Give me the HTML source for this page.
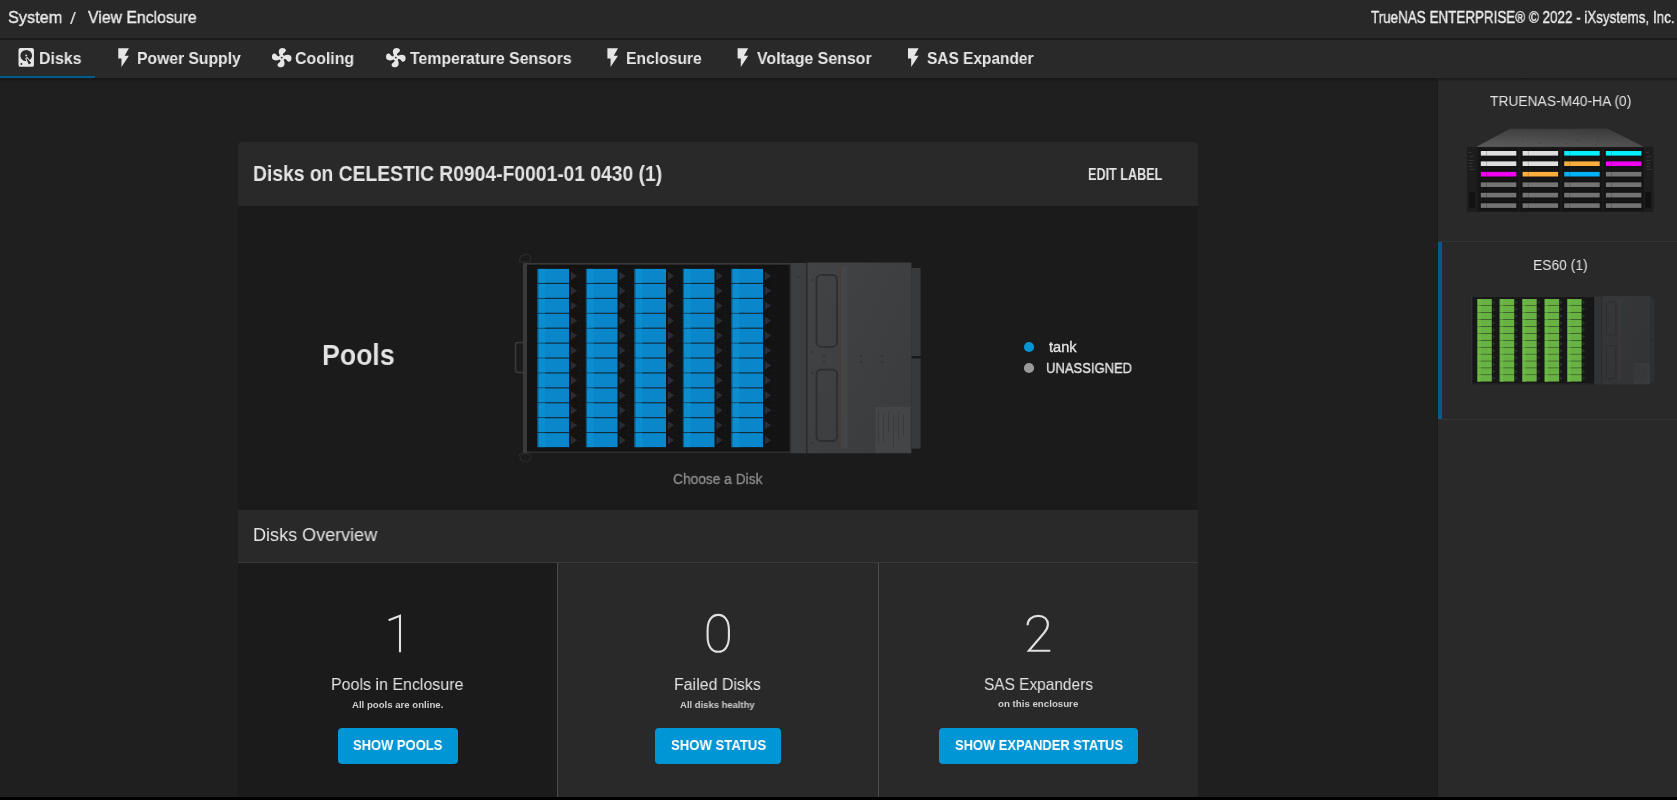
<!DOCTYPE html>
<html><head><meta charset="utf-8"><style>*{margin:0;padding:0;box-sizing:border-box}
html,body{width:1677px;height:800px;overflow:hidden;background:#1f1f1f;font-family:"Liberation Sans",sans-serif;color:#e0e0e0}
.a{position:absolute}
.t{position:absolute;white-space:nowrap;line-height:1;transform-origin:0 0;will-change:transform}
svg{position:absolute;left:0;top:0}
</style></head><body>
<div class="a" style="left:0px;top:0px;width:1677px;height:38px;background:#282828;"></div>
<div class="a" style="left:0px;top:38px;width:1677px;height:2px;background:#1b1b1b;"></div>
<div class="a" style="left:0px;top:40px;width:1677px;height:38px;background:#292929;"></div>
<div class="a" style="left:0px;top:78px;width:1438px;height:5px;background:linear-gradient(#171717,#1f1f1f);"></div>
<div class="a" style="left:0px;top:76px;width:95px;height:2px;background:#005a8a;"></div>
<div class="a" style="left:1438px;top:78px;width:239px;height:722px;background:#292929;"></div>
<div class="a" style="left:1437px;top:78px;width:1px;height:722px;background:#1b1b1b;"></div>
<div class="a" style="left:1438px;top:78px;width:239px;height:4px;background:linear-gradient(#1a1a1a,#292929);"></div>
<div class="a" style="left:1438px;top:241px;width:239px;height:1px;background:#333;"></div>
<div class="a" style="left:1438px;top:419px;width:239px;height:1px;background:#333;"></div>
<div class="a" style="left:1438px;top:242px;width:4px;height:177px;background:#005a8a;"></div>
<div class="a" style="left:238px;top:142px;width:960px;height:64px;background:#292929;border-radius:4px 4px 0 0"></div>
<div class="a" style="left:238px;top:206px;width:960px;height:304px;background:#1b1b1b;"></div>
<div class="a" style="left:238px;top:510px;width:960px;height:52px;background:#292929;"></div>
<div class="a" style="left:238px;top:562px;width:960px;height:1px;background:#3a3a3a;"></div>
<div class="a" style="left:238px;top:563px;width:319px;height:234px;background:#1b1b1b;"></div>
<div class="a" style="left:558px;top:563px;width:640px;height:234px;background:#292929;"></div>
<div class="a" style="left:557px;top:563px;width:1px;height:234px;background:#4c4c4c;"></div>
<div class="a" style="left:878px;top:563px;width:1px;height:234px;background:#4c4c4c;"></div>
<div class="a" style="left:338px;top:728px;width:120px;height:36px;background:#0095d5;border-radius:4px"></div>
<div class="a" style="left:655px;top:728px;width:126px;height:36px;background:#0095d5;border-radius:4px"></div>
<div class="a" style="left:939px;top:728px;width:199px;height:36px;background:#0095d5;border-radius:4px"></div>
<div class="a" style="left:0px;top:797px;width:1677px;height:3px;background:#000;"></div>
<svg width="1677" height="800" viewBox="0 0 1677 800"><g transform="translate(14.65,46.2) scale(0.965,0.935)"><path fill="#e6e6e6" d="M6,2H18A2,2 0 0,1 20,4V20A2,2 0 0,1 18,22H6A2,2 0 0,1 4,20V4A2,2 0 0,1 6,2M12,4A6,6 0 0,0 6,10C6,13.31 8.69,16 12.1,16L11.22,13.77C10.95,13.29 11.11,12.68 11.59,12.4L12.45,11.9C12.93,11.63 13.54,11.790 13.82,12.27L15.74,14.69C17.12,13.59 18,11.9 18,10A6,6 0 0,0 12,4M12,9A1,1 0 0,1 13,10A1,1 0 0,1 12,11A1,1 0 0,1 11,10A1,1 0 0,1 12,9M7,18A1,1 0 0,0 6,19A1,1 0 0,0 7,20A1,1 0 0,0 8,19A1,1 0 0,0 7,18M12.09,13.27L14.58,19.58L17.17,18.08L12.95,12.77L12.09,13.27Z"/></g>
<g transform="translate(110.88,46.32) scale(1.06,0.94)"><path fill="#e6e6e6" d="M7,2V13H10V22L17,10H13L17,2H7Z"/></g>
<g transform="translate(599.98,46.32) scale(1.06,0.94)"><path fill="#e6e6e6" d="M7,2V13H10V22L17,10H13L17,2H7Z"/></g>
<g transform="translate(730.18,46.32) scale(1.06,0.94)"><path fill="#e6e6e6" d="M7,2V13H10V22L17,10H13L17,2H7Z"/></g>
<g transform="translate(900.58,46.32) scale(1.06,0.94)"><path fill="#e6e6e6" d="M7,2V13H10V22L17,10H13L17,2H7Z"/></g>
<g transform="translate(269.94,46.08) scale(0.98,0.96)"><path fill="#e6e6e6" d="M12,11A1,1 0 0,0 11,12A1,1 0 0,0 12,13A1,1 0 0,0 13,12A1,1 0 0,0 12,11M12.5,2C17,2 17.11,5.57 14.75,6.75C13.76,7.24 13.32,8.29 13.13,9.22C13.61,9.42 14.03,9.73 14.35,10.13C18.05,8.13 22.03,8.92 22.03,12.5C22.03,17 18.46,17.1 17.28,14.73C16.78,13.74 15.72,13.3 14.79,13.11C14.59,13.59 14.28,14 13.88,14.34C15.87,18.03 15.08,22 11.5,22C7,22 6.91,18.42 9.27,17.24C10.25,16.75 10.69,15.71 10.89,14.79C10.4,14.59 9.97,14.27 9.65,13.87C5.96,15.85 2,15.07 2,11.5C2,7 5.56,6.89 6.74,9.26C7.24,10.25 8.29,10.68 9.22,10.87C9.41,10.39 9.73,9.97 10.14,9.65C8.15,5.96 8.94,2 12.5,2Z"/></g>
<g transform="translate(384.04,46.08) scale(0.98,0.96)"><path fill="#e6e6e6" d="M12,11A1,1 0 0,0 11,12A1,1 0 0,0 12,13A1,1 0 0,0 13,12A1,1 0 0,0 12,11M12.5,2C17,2 17.11,5.57 14.75,6.75C13.76,7.24 13.32,8.29 13.13,9.22C13.61,9.42 14.03,9.73 14.35,10.13C18.05,8.13 22.03,8.92 22.03,12.5C22.03,17 18.46,17.1 17.28,14.73C16.78,13.74 15.72,13.3 14.79,13.11C14.59,13.59 14.28,14 13.88,14.34C15.87,18.03 15.08,22 11.5,22C7,22 6.91,18.42 9.27,17.24C10.25,16.75 10.69,15.71 10.89,14.79C10.4,14.59 9.97,14.27 9.65,13.87C5.96,15.85 2,15.07 2,11.5C2,7 5.56,6.89 6.74,9.26C7.24,10.25 8.29,10.68 9.22,10.87C9.41,10.39 9.73,9.97 10.14,9.65C8.15,5.96 8.94,2 12.5,2Z"/></g><g fill="none" stroke="#e0e0e0" stroke-width="2.1" stroke-linecap="butt" stroke-linejoin="miter">
<path d="M388.6,620.2 L400,615.8 V652.3"/>
<path d="M718.2,614.9 C724.6,614.9 728.9,620.5 728.9,630 V636.8 C728.9,646.2 724.6,651.8 718.2,651.8 C711.8,651.8 707.6,646.2 707.6,636.8 V630 C707.6,620.5 711.8,614.9 718.2,614.9 Z"/>
<path d="M1027.6,625.2 C1027.6,619.5 1032.3,615.9 1038.3,615.9 C1044.3,615.9 1047.9,619.6 1047.9,624.3 C1047.9,627.6 1046.5,630.2 1044,633 L1028.8,650.8 H1050.3"/>
</g><defs><linearGradient id="pg" x1="0" x2="1" y1="0" y2="1"><stop offset="0" stop-color="#414344"/><stop offset="1" stop-color="#393b3c"/></linearGradient><linearGradient id="pg2" x1="0" x2="1" y1="0" y2="1"><stop offset="0" stop-color="#353738"/><stop offset="1" stop-color="#313334"/></linearGradient></defs><path d="M519,262 l2,-6 l6,-2 l4,3 l-1,5z" fill="none" stroke="#2c2c2c" stroke-width="1"/>
<path d="M519,454 l2,6 l6,2 l4,-3 l-1,-5z" fill="none" stroke="#2c2c2c" stroke-width="1"/>
<path d="M523,342.5 h-5 q-2.5,0 -2.5,2.5 v25 q0,2.5 2.5,2.5 h5" fill="none" stroke="#3a3a3a" stroke-width="1.6"/>
<rect x="523" y="263" width="267" height="190" fill="#131313"/>
<rect x="523" y="263" width="267" height="1.6" fill="#3a3a3a"/>
<rect x="523" y="451.4" width="267" height="1.6" fill="#2e2e2e"/>
<rect x="523" y="263" width="4" height="190" fill="#3a3a3a"/>
<rect x="537.40" y="268.90" width="31.6" height="14.0" fill="#0a87ca"/>
<rect x="538.40" y="268.90" width="6.8" height="14.0" fill="#0c8dd0"/>
<rect x="537.40" y="268.90" width="1" height="14.0" fill="#05507a"/>
<path d="M570.80,271.60 L577.20,275.90 L570.80,280.20Z" fill="#272d36"/>
<rect x="579.70" y="270.90" width="0.8" height="0.8" fill="#2c2c2c"/>
<rect x="579.70" y="275.90" width="0.8" height="0.8" fill="#2c2c2c"/>
<rect x="579.70" y="280.90" width="0.8" height="0.8" fill="#2c2c2c"/>
<rect x="537.40" y="283.83" width="31.6" height="14.0" fill="#0a87ca"/>
<rect x="538.40" y="283.83" width="6.8" height="14.0" fill="#0c8dd0"/>
<rect x="537.40" y="283.83" width="1" height="14.0" fill="#05507a"/>
<path d="M570.80,286.53 L577.20,290.83 L570.80,295.13Z" fill="#272d36"/>
<rect x="579.70" y="285.83" width="0.8" height="0.8" fill="#2c2c2c"/>
<rect x="579.70" y="290.83" width="0.8" height="0.8" fill="#2c2c2c"/>
<rect x="579.70" y="295.83" width="0.8" height="0.8" fill="#2c2c2c"/>
<rect x="537.40" y="298.76" width="31.6" height="14.0" fill="#0a87ca"/>
<rect x="538.40" y="298.76" width="6.8" height="14.0" fill="#0c8dd0"/>
<rect x="537.40" y="298.76" width="1" height="14.0" fill="#05507a"/>
<path d="M570.80,301.46 L577.20,305.76 L570.80,310.06Z" fill="#272d36"/>
<rect x="579.70" y="300.76" width="0.8" height="0.8" fill="#2c2c2c"/>
<rect x="579.70" y="305.76" width="0.8" height="0.8" fill="#2c2c2c"/>
<rect x="579.70" y="310.76" width="0.8" height="0.8" fill="#2c2c2c"/>
<rect x="537.40" y="313.69" width="31.6" height="14.0" fill="#0a87ca"/>
<rect x="538.40" y="313.69" width="6.8" height="14.0" fill="#0c8dd0"/>
<rect x="537.40" y="313.69" width="1" height="14.0" fill="#05507a"/>
<path d="M570.80,316.39 L577.20,320.69 L570.80,324.99Z" fill="#272d36"/>
<rect x="579.70" y="315.69" width="0.8" height="0.8" fill="#2c2c2c"/>
<rect x="579.70" y="320.69" width="0.8" height="0.8" fill="#2c2c2c"/>
<rect x="579.70" y="325.69" width="0.8" height="0.8" fill="#2c2c2c"/>
<rect x="537.40" y="328.62" width="31.6" height="14.0" fill="#0a87ca"/>
<rect x="538.40" y="328.62" width="6.8" height="14.0" fill="#0c8dd0"/>
<rect x="537.40" y="328.62" width="1" height="14.0" fill="#05507a"/>
<path d="M570.80,331.32 L577.20,335.62 L570.80,339.92Z" fill="#272d36"/>
<rect x="579.70" y="330.62" width="0.8" height="0.8" fill="#2c2c2c"/>
<rect x="579.70" y="335.62" width="0.8" height="0.8" fill="#2c2c2c"/>
<rect x="579.70" y="340.62" width="0.8" height="0.8" fill="#2c2c2c"/>
<rect x="537.40" y="343.55" width="31.6" height="14.0" fill="#0a87ca"/>
<rect x="538.40" y="343.55" width="6.8" height="14.0" fill="#0c8dd0"/>
<rect x="537.40" y="343.55" width="1" height="14.0" fill="#05507a"/>
<path d="M570.80,346.25 L577.20,350.55 L570.80,354.85Z" fill="#272d36"/>
<rect x="579.70" y="345.55" width="0.8" height="0.8" fill="#2c2c2c"/>
<rect x="579.70" y="350.55" width="0.8" height="0.8" fill="#2c2c2c"/>
<rect x="579.70" y="355.55" width="0.8" height="0.8" fill="#2c2c2c"/>
<rect x="537.40" y="358.48" width="31.6" height="14.0" fill="#0a87ca"/>
<rect x="538.40" y="358.48" width="6.8" height="14.0" fill="#0c8dd0"/>
<rect x="537.40" y="358.48" width="1" height="14.0" fill="#05507a"/>
<path d="M570.80,361.18 L577.20,365.48 L570.80,369.78Z" fill="#272d36"/>
<rect x="579.70" y="360.48" width="0.8" height="0.8" fill="#2c2c2c"/>
<rect x="579.70" y="365.48" width="0.8" height="0.8" fill="#2c2c2c"/>
<rect x="579.70" y="370.48" width="0.8" height="0.8" fill="#2c2c2c"/>
<rect x="537.40" y="373.41" width="31.6" height="14.0" fill="#0a87ca"/>
<rect x="538.40" y="373.41" width="6.8" height="14.0" fill="#0c8dd0"/>
<rect x="537.40" y="373.41" width="1" height="14.0" fill="#05507a"/>
<path d="M570.80,376.11 L577.20,380.41 L570.80,384.71Z" fill="#272d36"/>
<rect x="579.70" y="375.41" width="0.8" height="0.8" fill="#2c2c2c"/>
<rect x="579.70" y="380.41" width="0.8" height="0.8" fill="#2c2c2c"/>
<rect x="579.70" y="385.41" width="0.8" height="0.8" fill="#2c2c2c"/>
<rect x="537.40" y="388.34" width="31.6" height="14.0" fill="#0a87ca"/>
<rect x="538.40" y="388.34" width="6.8" height="14.0" fill="#0c8dd0"/>
<rect x="537.40" y="388.34" width="1" height="14.0" fill="#05507a"/>
<path d="M570.80,391.04 L577.20,395.34 L570.80,399.64Z" fill="#272d36"/>
<rect x="579.70" y="390.34" width="0.8" height="0.8" fill="#2c2c2c"/>
<rect x="579.70" y="395.34" width="0.8" height="0.8" fill="#2c2c2c"/>
<rect x="579.70" y="400.34" width="0.8" height="0.8" fill="#2c2c2c"/>
<rect x="537.40" y="403.27" width="31.6" height="14.0" fill="#0a87ca"/>
<rect x="538.40" y="403.27" width="6.8" height="14.0" fill="#0c8dd0"/>
<rect x="537.40" y="403.27" width="1" height="14.0" fill="#05507a"/>
<path d="M570.80,405.97 L577.20,410.27 L570.80,414.57Z" fill="#272d36"/>
<rect x="579.70" y="405.27" width="0.8" height="0.8" fill="#2c2c2c"/>
<rect x="579.70" y="410.27" width="0.8" height="0.8" fill="#2c2c2c"/>
<rect x="579.70" y="415.27" width="0.8" height="0.8" fill="#2c2c2c"/>
<rect x="537.40" y="418.20" width="31.6" height="14.0" fill="#0a87ca"/>
<rect x="538.40" y="418.20" width="6.8" height="14.0" fill="#0c8dd0"/>
<rect x="537.40" y="418.20" width="1" height="14.0" fill="#05507a"/>
<path d="M570.80,420.90 L577.20,425.20 L570.80,429.50Z" fill="#272d36"/>
<rect x="579.70" y="420.20" width="0.8" height="0.8" fill="#2c2c2c"/>
<rect x="579.70" y="425.20" width="0.8" height="0.8" fill="#2c2c2c"/>
<rect x="579.70" y="430.20" width="0.8" height="0.8" fill="#2c2c2c"/>
<rect x="537.40" y="433.13" width="31.6" height="14.0" fill="#0a87ca"/>
<rect x="538.40" y="433.13" width="6.8" height="14.0" fill="#0c8dd0"/>
<rect x="537.40" y="433.13" width="1" height="14.0" fill="#05507a"/>
<path d="M570.80,435.83 L577.20,440.13 L570.80,444.43Z" fill="#272d36"/>
<rect x="579.70" y="435.13" width="0.8" height="0.8" fill="#2c2c2c"/>
<rect x="579.70" y="440.13" width="0.8" height="0.8" fill="#2c2c2c"/>
<rect x="579.70" y="445.13" width="0.8" height="0.8" fill="#2c2c2c"/>
<rect x="585.90" y="268.90" width="31.6" height="14.0" fill="#0a87ca"/>
<rect x="586.90" y="268.90" width="6.8" height="14.0" fill="#0c8dd0"/>
<rect x="585.90" y="268.90" width="1" height="14.0" fill="#05507a"/>
<path d="M619.30,271.60 L625.70,275.90 L619.30,280.20Z" fill="#272d36"/>
<rect x="628.20" y="270.90" width="0.8" height="0.8" fill="#2c2c2c"/>
<rect x="628.20" y="275.90" width="0.8" height="0.8" fill="#2c2c2c"/>
<rect x="628.20" y="280.90" width="0.8" height="0.8" fill="#2c2c2c"/>
<rect x="585.90" y="283.83" width="31.6" height="14.0" fill="#0a87ca"/>
<rect x="586.90" y="283.83" width="6.8" height="14.0" fill="#0c8dd0"/>
<rect x="585.90" y="283.83" width="1" height="14.0" fill="#05507a"/>
<path d="M619.30,286.53 L625.70,290.83 L619.30,295.13Z" fill="#272d36"/>
<rect x="628.20" y="285.83" width="0.8" height="0.8" fill="#2c2c2c"/>
<rect x="628.20" y="290.83" width="0.8" height="0.8" fill="#2c2c2c"/>
<rect x="628.20" y="295.83" width="0.8" height="0.8" fill="#2c2c2c"/>
<rect x="585.90" y="298.76" width="31.6" height="14.0" fill="#0a87ca"/>
<rect x="586.90" y="298.76" width="6.8" height="14.0" fill="#0c8dd0"/>
<rect x="585.90" y="298.76" width="1" height="14.0" fill="#05507a"/>
<path d="M619.30,301.46 L625.70,305.76 L619.30,310.06Z" fill="#272d36"/>
<rect x="628.20" y="300.76" width="0.8" height="0.8" fill="#2c2c2c"/>
<rect x="628.20" y="305.76" width="0.8" height="0.8" fill="#2c2c2c"/>
<rect x="628.20" y="310.76" width="0.8" height="0.8" fill="#2c2c2c"/>
<rect x="585.90" y="313.69" width="31.6" height="14.0" fill="#0a87ca"/>
<rect x="586.90" y="313.69" width="6.8" height="14.0" fill="#0c8dd0"/>
<rect x="585.90" y="313.69" width="1" height="14.0" fill="#05507a"/>
<path d="M619.30,316.39 L625.70,320.69 L619.30,324.99Z" fill="#272d36"/>
<rect x="628.20" y="315.69" width="0.8" height="0.8" fill="#2c2c2c"/>
<rect x="628.20" y="320.69" width="0.8" height="0.8" fill="#2c2c2c"/>
<rect x="628.20" y="325.69" width="0.8" height="0.8" fill="#2c2c2c"/>
<rect x="585.90" y="328.62" width="31.6" height="14.0" fill="#0a87ca"/>
<rect x="586.90" y="328.62" width="6.8" height="14.0" fill="#0c8dd0"/>
<rect x="585.90" y="328.62" width="1" height="14.0" fill="#05507a"/>
<path d="M619.30,331.32 L625.70,335.62 L619.30,339.92Z" fill="#272d36"/>
<rect x="628.20" y="330.62" width="0.8" height="0.8" fill="#2c2c2c"/>
<rect x="628.20" y="335.62" width="0.8" height="0.8" fill="#2c2c2c"/>
<rect x="628.20" y="340.62" width="0.8" height="0.8" fill="#2c2c2c"/>
<rect x="585.90" y="343.55" width="31.6" height="14.0" fill="#0a87ca"/>
<rect x="586.90" y="343.55" width="6.8" height="14.0" fill="#0c8dd0"/>
<rect x="585.90" y="343.55" width="1" height="14.0" fill="#05507a"/>
<path d="M619.30,346.25 L625.70,350.55 L619.30,354.85Z" fill="#272d36"/>
<rect x="628.20" y="345.55" width="0.8" height="0.8" fill="#2c2c2c"/>
<rect x="628.20" y="350.55" width="0.8" height="0.8" fill="#2c2c2c"/>
<rect x="628.20" y="355.55" width="0.8" height="0.8" fill="#2c2c2c"/>
<rect x="585.90" y="358.48" width="31.6" height="14.0" fill="#0a87ca"/>
<rect x="586.90" y="358.48" width="6.8" height="14.0" fill="#0c8dd0"/>
<rect x="585.90" y="358.48" width="1" height="14.0" fill="#05507a"/>
<path d="M619.30,361.18 L625.70,365.48 L619.30,369.78Z" fill="#272d36"/>
<rect x="628.20" y="360.48" width="0.8" height="0.8" fill="#2c2c2c"/>
<rect x="628.20" y="365.48" width="0.8" height="0.8" fill="#2c2c2c"/>
<rect x="628.20" y="370.48" width="0.8" height="0.8" fill="#2c2c2c"/>
<rect x="585.90" y="373.41" width="31.6" height="14.0" fill="#0a87ca"/>
<rect x="586.90" y="373.41" width="6.8" height="14.0" fill="#0c8dd0"/>
<rect x="585.90" y="373.41" width="1" height="14.0" fill="#05507a"/>
<path d="M619.30,376.11 L625.70,380.41 L619.30,384.71Z" fill="#272d36"/>
<rect x="628.20" y="375.41" width="0.8" height="0.8" fill="#2c2c2c"/>
<rect x="628.20" y="380.41" width="0.8" height="0.8" fill="#2c2c2c"/>
<rect x="628.20" y="385.41" width="0.8" height="0.8" fill="#2c2c2c"/>
<rect x="585.90" y="388.34" width="31.6" height="14.0" fill="#0a87ca"/>
<rect x="586.90" y="388.34" width="6.8" height="14.0" fill="#0c8dd0"/>
<rect x="585.90" y="388.34" width="1" height="14.0" fill="#05507a"/>
<path d="M619.30,391.04 L625.70,395.34 L619.30,399.64Z" fill="#272d36"/>
<rect x="628.20" y="390.34" width="0.8" height="0.8" fill="#2c2c2c"/>
<rect x="628.20" y="395.34" width="0.8" height="0.8" fill="#2c2c2c"/>
<rect x="628.20" y="400.34" width="0.8" height="0.8" fill="#2c2c2c"/>
<rect x="585.90" y="403.27" width="31.6" height="14.0" fill="#0a87ca"/>
<rect x="586.90" y="403.27" width="6.8" height="14.0" fill="#0c8dd0"/>
<rect x="585.90" y="403.27" width="1" height="14.0" fill="#05507a"/>
<path d="M619.30,405.97 L625.70,410.27 L619.30,414.57Z" fill="#272d36"/>
<rect x="628.20" y="405.27" width="0.8" height="0.8" fill="#2c2c2c"/>
<rect x="628.20" y="410.27" width="0.8" height="0.8" fill="#2c2c2c"/>
<rect x="628.20" y="415.27" width="0.8" height="0.8" fill="#2c2c2c"/>
<rect x="585.90" y="418.20" width="31.6" height="14.0" fill="#0a87ca"/>
<rect x="586.90" y="418.20" width="6.8" height="14.0" fill="#0c8dd0"/>
<rect x="585.90" y="418.20" width="1" height="14.0" fill="#05507a"/>
<path d="M619.30,420.90 L625.70,425.20 L619.30,429.50Z" fill="#272d36"/>
<rect x="628.20" y="420.20" width="0.8" height="0.8" fill="#2c2c2c"/>
<rect x="628.20" y="425.20" width="0.8" height="0.8" fill="#2c2c2c"/>
<rect x="628.20" y="430.20" width="0.8" height="0.8" fill="#2c2c2c"/>
<rect x="585.90" y="433.13" width="31.6" height="14.0" fill="#0a87ca"/>
<rect x="586.90" y="433.13" width="6.8" height="14.0" fill="#0c8dd0"/>
<rect x="585.90" y="433.13" width="1" height="14.0" fill="#05507a"/>
<path d="M619.30,435.83 L625.70,440.13 L619.30,444.43Z" fill="#272d36"/>
<rect x="628.20" y="435.13" width="0.8" height="0.8" fill="#2c2c2c"/>
<rect x="628.20" y="440.13" width="0.8" height="0.8" fill="#2c2c2c"/>
<rect x="628.20" y="445.13" width="0.8" height="0.8" fill="#2c2c2c"/>
<rect x="634.40" y="268.90" width="31.6" height="14.0" fill="#0a87ca"/>
<rect x="635.40" y="268.90" width="6.8" height="14.0" fill="#0c8dd0"/>
<rect x="634.40" y="268.90" width="1" height="14.0" fill="#05507a"/>
<path d="M667.80,271.60 L674.20,275.90 L667.80,280.20Z" fill="#272d36"/>
<rect x="676.70" y="270.90" width="0.8" height="0.8" fill="#2c2c2c"/>
<rect x="676.70" y="275.90" width="0.8" height="0.8" fill="#2c2c2c"/>
<rect x="676.70" y="280.90" width="0.8" height="0.8" fill="#2c2c2c"/>
<rect x="634.40" y="283.83" width="31.6" height="14.0" fill="#0a87ca"/>
<rect x="635.40" y="283.83" width="6.8" height="14.0" fill="#0c8dd0"/>
<rect x="634.40" y="283.83" width="1" height="14.0" fill="#05507a"/>
<path d="M667.80,286.53 L674.20,290.83 L667.80,295.13Z" fill="#272d36"/>
<rect x="676.70" y="285.83" width="0.8" height="0.8" fill="#2c2c2c"/>
<rect x="676.70" y="290.83" width="0.8" height="0.8" fill="#2c2c2c"/>
<rect x="676.70" y="295.83" width="0.8" height="0.8" fill="#2c2c2c"/>
<rect x="634.40" y="298.76" width="31.6" height="14.0" fill="#0a87ca"/>
<rect x="635.40" y="298.76" width="6.8" height="14.0" fill="#0c8dd0"/>
<rect x="634.40" y="298.76" width="1" height="14.0" fill="#05507a"/>
<path d="M667.80,301.46 L674.20,305.76 L667.80,310.06Z" fill="#272d36"/>
<rect x="676.70" y="300.76" width="0.8" height="0.8" fill="#2c2c2c"/>
<rect x="676.70" y="305.76" width="0.8" height="0.8" fill="#2c2c2c"/>
<rect x="676.70" y="310.76" width="0.8" height="0.8" fill="#2c2c2c"/>
<rect x="634.40" y="313.69" width="31.6" height="14.0" fill="#0a87ca"/>
<rect x="635.40" y="313.69" width="6.8" height="14.0" fill="#0c8dd0"/>
<rect x="634.40" y="313.69" width="1" height="14.0" fill="#05507a"/>
<path d="M667.80,316.39 L674.20,320.69 L667.80,324.99Z" fill="#272d36"/>
<rect x="676.70" y="315.69" width="0.8" height="0.8" fill="#2c2c2c"/>
<rect x="676.70" y="320.69" width="0.8" height="0.8" fill="#2c2c2c"/>
<rect x="676.70" y="325.69" width="0.8" height="0.8" fill="#2c2c2c"/>
<rect x="634.40" y="328.62" width="31.6" height="14.0" fill="#0a87ca"/>
<rect x="635.40" y="328.62" width="6.8" height="14.0" fill="#0c8dd0"/>
<rect x="634.40" y="328.62" width="1" height="14.0" fill="#05507a"/>
<path d="M667.80,331.32 L674.20,335.62 L667.80,339.92Z" fill="#272d36"/>
<rect x="676.70" y="330.62" width="0.8" height="0.8" fill="#2c2c2c"/>
<rect x="676.70" y="335.62" width="0.8" height="0.8" fill="#2c2c2c"/>
<rect x="676.70" y="340.62" width="0.8" height="0.8" fill="#2c2c2c"/>
<rect x="634.40" y="343.55" width="31.6" height="14.0" fill="#0a87ca"/>
<rect x="635.40" y="343.55" width="6.8" height="14.0" fill="#0c8dd0"/>
<rect x="634.40" y="343.55" width="1" height="14.0" fill="#05507a"/>
<path d="M667.80,346.25 L674.20,350.55 L667.80,354.85Z" fill="#272d36"/>
<rect x="676.70" y="345.55" width="0.8" height="0.8" fill="#2c2c2c"/>
<rect x="676.70" y="350.55" width="0.8" height="0.8" fill="#2c2c2c"/>
<rect x="676.70" y="355.55" width="0.8" height="0.8" fill="#2c2c2c"/>
<rect x="634.40" y="358.48" width="31.6" height="14.0" fill="#0a87ca"/>
<rect x="635.40" y="358.48" width="6.8" height="14.0" fill="#0c8dd0"/>
<rect x="634.40" y="358.48" width="1" height="14.0" fill="#05507a"/>
<path d="M667.80,361.18 L674.20,365.48 L667.80,369.78Z" fill="#272d36"/>
<rect x="676.70" y="360.48" width="0.8" height="0.8" fill="#2c2c2c"/>
<rect x="676.70" y="365.48" width="0.8" height="0.8" fill="#2c2c2c"/>
<rect x="676.70" y="370.48" width="0.8" height="0.8" fill="#2c2c2c"/>
<rect x="634.40" y="373.41" width="31.6" height="14.0" fill="#0a87ca"/>
<rect x="635.40" y="373.41" width="6.8" height="14.0" fill="#0c8dd0"/>
<rect x="634.40" y="373.41" width="1" height="14.0" fill="#05507a"/>
<path d="M667.80,376.11 L674.20,380.41 L667.80,384.71Z" fill="#272d36"/>
<rect x="676.70" y="375.41" width="0.8" height="0.8" fill="#2c2c2c"/>
<rect x="676.70" y="380.41" width="0.8" height="0.8" fill="#2c2c2c"/>
<rect x="676.70" y="385.41" width="0.8" height="0.8" fill="#2c2c2c"/>
<rect x="634.40" y="388.34" width="31.6" height="14.0" fill="#0a87ca"/>
<rect x="635.40" y="388.34" width="6.8" height="14.0" fill="#0c8dd0"/>
<rect x="634.40" y="388.34" width="1" height="14.0" fill="#05507a"/>
<path d="M667.80,391.04 L674.20,395.34 L667.80,399.64Z" fill="#272d36"/>
<rect x="676.70" y="390.34" width="0.8" height="0.8" fill="#2c2c2c"/>
<rect x="676.70" y="395.34" width="0.8" height="0.8" fill="#2c2c2c"/>
<rect x="676.70" y="400.34" width="0.8" height="0.8" fill="#2c2c2c"/>
<rect x="634.40" y="403.27" width="31.6" height="14.0" fill="#0a87ca"/>
<rect x="635.40" y="403.27" width="6.8" height="14.0" fill="#0c8dd0"/>
<rect x="634.40" y="403.27" width="1" height="14.0" fill="#05507a"/>
<path d="M667.80,405.97 L674.20,410.27 L667.80,414.57Z" fill="#272d36"/>
<rect x="676.70" y="405.27" width="0.8" height="0.8" fill="#2c2c2c"/>
<rect x="676.70" y="410.27" width="0.8" height="0.8" fill="#2c2c2c"/>
<rect x="676.70" y="415.27" width="0.8" height="0.8" fill="#2c2c2c"/>
<rect x="634.40" y="418.20" width="31.6" height="14.0" fill="#0a87ca"/>
<rect x="635.40" y="418.20" width="6.8" height="14.0" fill="#0c8dd0"/>
<rect x="634.40" y="418.20" width="1" height="14.0" fill="#05507a"/>
<path d="M667.80,420.90 L674.20,425.20 L667.80,429.50Z" fill="#272d36"/>
<rect x="676.70" y="420.20" width="0.8" height="0.8" fill="#2c2c2c"/>
<rect x="676.70" y="425.20" width="0.8" height="0.8" fill="#2c2c2c"/>
<rect x="676.70" y="430.20" width="0.8" height="0.8" fill="#2c2c2c"/>
<rect x="634.40" y="433.13" width="31.6" height="14.0" fill="#0a87ca"/>
<rect x="635.40" y="433.13" width="6.8" height="14.0" fill="#0c8dd0"/>
<rect x="634.40" y="433.13" width="1" height="14.0" fill="#05507a"/>
<path d="M667.80,435.83 L674.20,440.13 L667.80,444.43Z" fill="#272d36"/>
<rect x="676.70" y="435.13" width="0.8" height="0.8" fill="#2c2c2c"/>
<rect x="676.70" y="440.13" width="0.8" height="0.8" fill="#2c2c2c"/>
<rect x="676.70" y="445.13" width="0.8" height="0.8" fill="#2c2c2c"/>
<rect x="682.90" y="268.90" width="31.6" height="14.0" fill="#0a87ca"/>
<rect x="683.90" y="268.90" width="6.8" height="14.0" fill="#0c8dd0"/>
<rect x="682.90" y="268.90" width="1" height="14.0" fill="#05507a"/>
<path d="M716.30,271.60 L722.70,275.90 L716.30,280.20Z" fill="#272d36"/>
<rect x="725.20" y="270.90" width="0.8" height="0.8" fill="#2c2c2c"/>
<rect x="725.20" y="275.90" width="0.8" height="0.8" fill="#2c2c2c"/>
<rect x="725.20" y="280.90" width="0.8" height="0.8" fill="#2c2c2c"/>
<rect x="682.90" y="283.83" width="31.6" height="14.0" fill="#0a87ca"/>
<rect x="683.90" y="283.83" width="6.8" height="14.0" fill="#0c8dd0"/>
<rect x="682.90" y="283.83" width="1" height="14.0" fill="#05507a"/>
<path d="M716.30,286.53 L722.70,290.83 L716.30,295.13Z" fill="#272d36"/>
<rect x="725.20" y="285.83" width="0.8" height="0.8" fill="#2c2c2c"/>
<rect x="725.20" y="290.83" width="0.8" height="0.8" fill="#2c2c2c"/>
<rect x="725.20" y="295.83" width="0.8" height="0.8" fill="#2c2c2c"/>
<rect x="682.90" y="298.76" width="31.6" height="14.0" fill="#0a87ca"/>
<rect x="683.90" y="298.76" width="6.8" height="14.0" fill="#0c8dd0"/>
<rect x="682.90" y="298.76" width="1" height="14.0" fill="#05507a"/>
<path d="M716.30,301.46 L722.70,305.76 L716.30,310.06Z" fill="#272d36"/>
<rect x="725.20" y="300.76" width="0.8" height="0.8" fill="#2c2c2c"/>
<rect x="725.20" y="305.76" width="0.8" height="0.8" fill="#2c2c2c"/>
<rect x="725.20" y="310.76" width="0.8" height="0.8" fill="#2c2c2c"/>
<rect x="682.90" y="313.69" width="31.6" height="14.0" fill="#0a87ca"/>
<rect x="683.90" y="313.69" width="6.8" height="14.0" fill="#0c8dd0"/>
<rect x="682.90" y="313.69" width="1" height="14.0" fill="#05507a"/>
<path d="M716.30,316.39 L722.70,320.69 L716.30,324.99Z" fill="#272d36"/>
<rect x="725.20" y="315.69" width="0.8" height="0.8" fill="#2c2c2c"/>
<rect x="725.20" y="320.69" width="0.8" height="0.8" fill="#2c2c2c"/>
<rect x="725.20" y="325.69" width="0.8" height="0.8" fill="#2c2c2c"/>
<rect x="682.90" y="328.62" width="31.6" height="14.0" fill="#0a87ca"/>
<rect x="683.90" y="328.62" width="6.8" height="14.0" fill="#0c8dd0"/>
<rect x="682.90" y="328.62" width="1" height="14.0" fill="#05507a"/>
<path d="M716.30,331.32 L722.70,335.62 L716.30,339.92Z" fill="#272d36"/>
<rect x="725.20" y="330.62" width="0.8" height="0.8" fill="#2c2c2c"/>
<rect x="725.20" y="335.62" width="0.8" height="0.8" fill="#2c2c2c"/>
<rect x="725.20" y="340.62" width="0.8" height="0.8" fill="#2c2c2c"/>
<rect x="682.90" y="343.55" width="31.6" height="14.0" fill="#0a87ca"/>
<rect x="683.90" y="343.55" width="6.8" height="14.0" fill="#0c8dd0"/>
<rect x="682.90" y="343.55" width="1" height="14.0" fill="#05507a"/>
<path d="M716.30,346.25 L722.70,350.55 L716.30,354.85Z" fill="#272d36"/>
<rect x="725.20" y="345.55" width="0.8" height="0.8" fill="#2c2c2c"/>
<rect x="725.20" y="350.55" width="0.8" height="0.8" fill="#2c2c2c"/>
<rect x="725.20" y="355.55" width="0.8" height="0.8" fill="#2c2c2c"/>
<rect x="682.90" y="358.48" width="31.6" height="14.0" fill="#0a87ca"/>
<rect x="683.90" y="358.48" width="6.8" height="14.0" fill="#0c8dd0"/>
<rect x="682.90" y="358.48" width="1" height="14.0" fill="#05507a"/>
<path d="M716.30,361.18 L722.70,365.48 L716.30,369.78Z" fill="#272d36"/>
<rect x="725.20" y="360.48" width="0.8" height="0.8" fill="#2c2c2c"/>
<rect x="725.20" y="365.48" width="0.8" height="0.8" fill="#2c2c2c"/>
<rect x="725.20" y="370.48" width="0.8" height="0.8" fill="#2c2c2c"/>
<rect x="682.90" y="373.41" width="31.6" height="14.0" fill="#0a87ca"/>
<rect x="683.90" y="373.41" width="6.8" height="14.0" fill="#0c8dd0"/>
<rect x="682.90" y="373.41" width="1" height="14.0" fill="#05507a"/>
<path d="M716.30,376.11 L722.70,380.41 L716.30,384.71Z" fill="#272d36"/>
<rect x="725.20" y="375.41" width="0.8" height="0.8" fill="#2c2c2c"/>
<rect x="725.20" y="380.41" width="0.8" height="0.8" fill="#2c2c2c"/>
<rect x="725.20" y="385.41" width="0.8" height="0.8" fill="#2c2c2c"/>
<rect x="682.90" y="388.34" width="31.6" height="14.0" fill="#0a87ca"/>
<rect x="683.90" y="388.34" width="6.8" height="14.0" fill="#0c8dd0"/>
<rect x="682.90" y="388.34" width="1" height="14.0" fill="#05507a"/>
<path d="M716.30,391.04 L722.70,395.34 L716.30,399.64Z" fill="#272d36"/>
<rect x="725.20" y="390.34" width="0.8" height="0.8" fill="#2c2c2c"/>
<rect x="725.20" y="395.34" width="0.8" height="0.8" fill="#2c2c2c"/>
<rect x="725.20" y="400.34" width="0.8" height="0.8" fill="#2c2c2c"/>
<rect x="682.90" y="403.27" width="31.6" height="14.0" fill="#0a87ca"/>
<rect x="683.90" y="403.27" width="6.8" height="14.0" fill="#0c8dd0"/>
<rect x="682.90" y="403.27" width="1" height="14.0" fill="#05507a"/>
<path d="M716.30,405.97 L722.70,410.27 L716.30,414.57Z" fill="#272d36"/>
<rect x="725.20" y="405.27" width="0.8" height="0.8" fill="#2c2c2c"/>
<rect x="725.20" y="410.27" width="0.8" height="0.8" fill="#2c2c2c"/>
<rect x="725.20" y="415.27" width="0.8" height="0.8" fill="#2c2c2c"/>
<rect x="682.90" y="418.20" width="31.6" height="14.0" fill="#0a87ca"/>
<rect x="683.90" y="418.20" width="6.8" height="14.0" fill="#0c8dd0"/>
<rect x="682.90" y="418.20" width="1" height="14.0" fill="#05507a"/>
<path d="M716.30,420.90 L722.70,425.20 L716.30,429.50Z" fill="#272d36"/>
<rect x="725.20" y="420.20" width="0.8" height="0.8" fill="#2c2c2c"/>
<rect x="725.20" y="425.20" width="0.8" height="0.8" fill="#2c2c2c"/>
<rect x="725.20" y="430.20" width="0.8" height="0.8" fill="#2c2c2c"/>
<rect x="682.90" y="433.13" width="31.6" height="14.0" fill="#0a87ca"/>
<rect x="683.90" y="433.13" width="6.8" height="14.0" fill="#0c8dd0"/>
<rect x="682.90" y="433.13" width="1" height="14.0" fill="#05507a"/>
<path d="M716.30,435.83 L722.70,440.13 L716.30,444.43Z" fill="#272d36"/>
<rect x="725.20" y="435.13" width="0.8" height="0.8" fill="#2c2c2c"/>
<rect x="725.20" y="440.13" width="0.8" height="0.8" fill="#2c2c2c"/>
<rect x="725.20" y="445.13" width="0.8" height="0.8" fill="#2c2c2c"/>
<rect x="731.40" y="268.90" width="31.6" height="14.0" fill="#0a87ca"/>
<rect x="732.40" y="268.90" width="6.8" height="14.0" fill="#0c8dd0"/>
<rect x="731.40" y="268.90" width="1" height="14.0" fill="#05507a"/>
<path d="M764.80,271.60 L771.20,275.90 L764.80,280.20Z" fill="#272d36"/>
<rect x="773.70" y="270.90" width="0.8" height="0.8" fill="#2c2c2c"/>
<rect x="773.70" y="275.90" width="0.8" height="0.8" fill="#2c2c2c"/>
<rect x="773.70" y="280.90" width="0.8" height="0.8" fill="#2c2c2c"/>
<rect x="731.40" y="283.83" width="31.6" height="14.0" fill="#0a87ca"/>
<rect x="732.40" y="283.83" width="6.8" height="14.0" fill="#0c8dd0"/>
<rect x="731.40" y="283.83" width="1" height="14.0" fill="#05507a"/>
<path d="M764.80,286.53 L771.20,290.83 L764.80,295.13Z" fill="#272d36"/>
<rect x="773.70" y="285.83" width="0.8" height="0.8" fill="#2c2c2c"/>
<rect x="773.70" y="290.83" width="0.8" height="0.8" fill="#2c2c2c"/>
<rect x="773.70" y="295.83" width="0.8" height="0.8" fill="#2c2c2c"/>
<rect x="731.40" y="298.76" width="31.6" height="14.0" fill="#0a87ca"/>
<rect x="732.40" y="298.76" width="6.8" height="14.0" fill="#0c8dd0"/>
<rect x="731.40" y="298.76" width="1" height="14.0" fill="#05507a"/>
<path d="M764.80,301.46 L771.20,305.76 L764.80,310.06Z" fill="#272d36"/>
<rect x="773.70" y="300.76" width="0.8" height="0.8" fill="#2c2c2c"/>
<rect x="773.70" y="305.76" width="0.8" height="0.8" fill="#2c2c2c"/>
<rect x="773.70" y="310.76" width="0.8" height="0.8" fill="#2c2c2c"/>
<rect x="731.40" y="313.69" width="31.6" height="14.0" fill="#0a87ca"/>
<rect x="732.40" y="313.69" width="6.8" height="14.0" fill="#0c8dd0"/>
<rect x="731.40" y="313.69" width="1" height="14.0" fill="#05507a"/>
<path d="M764.80,316.39 L771.20,320.69 L764.80,324.99Z" fill="#272d36"/>
<rect x="773.70" y="315.69" width="0.8" height="0.8" fill="#2c2c2c"/>
<rect x="773.70" y="320.69" width="0.8" height="0.8" fill="#2c2c2c"/>
<rect x="773.70" y="325.69" width="0.8" height="0.8" fill="#2c2c2c"/>
<rect x="731.40" y="328.62" width="31.6" height="14.0" fill="#0a87ca"/>
<rect x="732.40" y="328.62" width="6.8" height="14.0" fill="#0c8dd0"/>
<rect x="731.40" y="328.62" width="1" height="14.0" fill="#05507a"/>
<path d="M764.80,331.32 L771.20,335.62 L764.80,339.92Z" fill="#272d36"/>
<rect x="773.70" y="330.62" width="0.8" height="0.8" fill="#2c2c2c"/>
<rect x="773.70" y="335.62" width="0.8" height="0.8" fill="#2c2c2c"/>
<rect x="773.70" y="340.62" width="0.8" height="0.8" fill="#2c2c2c"/>
<rect x="731.40" y="343.55" width="31.6" height="14.0" fill="#0a87ca"/>
<rect x="732.40" y="343.55" width="6.8" height="14.0" fill="#0c8dd0"/>
<rect x="731.40" y="343.55" width="1" height="14.0" fill="#05507a"/>
<path d="M764.80,346.25 L771.20,350.55 L764.80,354.85Z" fill="#272d36"/>
<rect x="773.70" y="345.55" width="0.8" height="0.8" fill="#2c2c2c"/>
<rect x="773.70" y="350.55" width="0.8" height="0.8" fill="#2c2c2c"/>
<rect x="773.70" y="355.55" width="0.8" height="0.8" fill="#2c2c2c"/>
<rect x="731.40" y="358.48" width="31.6" height="14.0" fill="#0a87ca"/>
<rect x="732.40" y="358.48" width="6.8" height="14.0" fill="#0c8dd0"/>
<rect x="731.40" y="358.48" width="1" height="14.0" fill="#05507a"/>
<path d="M764.80,361.18 L771.20,365.48 L764.80,369.78Z" fill="#272d36"/>
<rect x="773.70" y="360.48" width="0.8" height="0.8" fill="#2c2c2c"/>
<rect x="773.70" y="365.48" width="0.8" height="0.8" fill="#2c2c2c"/>
<rect x="773.70" y="370.48" width="0.8" height="0.8" fill="#2c2c2c"/>
<rect x="731.40" y="373.41" width="31.6" height="14.0" fill="#0a87ca"/>
<rect x="732.40" y="373.41" width="6.8" height="14.0" fill="#0c8dd0"/>
<rect x="731.40" y="373.41" width="1" height="14.0" fill="#05507a"/>
<path d="M764.80,376.11 L771.20,380.41 L764.80,384.71Z" fill="#272d36"/>
<rect x="773.70" y="375.41" width="0.8" height="0.8" fill="#2c2c2c"/>
<rect x="773.70" y="380.41" width="0.8" height="0.8" fill="#2c2c2c"/>
<rect x="773.70" y="385.41" width="0.8" height="0.8" fill="#2c2c2c"/>
<rect x="731.40" y="388.34" width="31.6" height="14.0" fill="#0a87ca"/>
<rect x="732.40" y="388.34" width="6.8" height="14.0" fill="#0c8dd0"/>
<rect x="731.40" y="388.34" width="1" height="14.0" fill="#05507a"/>
<path d="M764.80,391.04 L771.20,395.34 L764.80,399.64Z" fill="#272d36"/>
<rect x="773.70" y="390.34" width="0.8" height="0.8" fill="#2c2c2c"/>
<rect x="773.70" y="395.34" width="0.8" height="0.8" fill="#2c2c2c"/>
<rect x="773.70" y="400.34" width="0.8" height="0.8" fill="#2c2c2c"/>
<rect x="731.40" y="403.27" width="31.6" height="14.0" fill="#0a87ca"/>
<rect x="732.40" y="403.27" width="6.8" height="14.0" fill="#0c8dd0"/>
<rect x="731.40" y="403.27" width="1" height="14.0" fill="#05507a"/>
<path d="M764.80,405.97 L771.20,410.27 L764.80,414.57Z" fill="#272d36"/>
<rect x="773.70" y="405.27" width="0.8" height="0.8" fill="#2c2c2c"/>
<rect x="773.70" y="410.27" width="0.8" height="0.8" fill="#2c2c2c"/>
<rect x="773.70" y="415.27" width="0.8" height="0.8" fill="#2c2c2c"/>
<rect x="731.40" y="418.20" width="31.6" height="14.0" fill="#0a87ca"/>
<rect x="732.40" y="418.20" width="6.8" height="14.0" fill="#0c8dd0"/>
<rect x="731.40" y="418.20" width="1" height="14.0" fill="#05507a"/>
<path d="M764.80,420.90 L771.20,425.20 L764.80,429.50Z" fill="#272d36"/>
<rect x="773.70" y="420.20" width="0.8" height="0.8" fill="#2c2c2c"/>
<rect x="773.70" y="425.20" width="0.8" height="0.8" fill="#2c2c2c"/>
<rect x="773.70" y="430.20" width="0.8" height="0.8" fill="#2c2c2c"/>
<rect x="731.40" y="433.13" width="31.6" height="14.0" fill="#0a87ca"/>
<rect x="732.40" y="433.13" width="6.8" height="14.0" fill="#0c8dd0"/>
<rect x="731.40" y="433.13" width="1" height="14.0" fill="#05507a"/>
<path d="M764.80,435.83 L771.20,440.13 L764.80,444.43Z" fill="#272d36"/>
<rect x="773.70" y="435.13" width="0.8" height="0.8" fill="#2c2c2c"/>
<rect x="773.70" y="440.13" width="0.8" height="0.8" fill="#2c2c2c"/>
<rect x="773.70" y="445.13" width="0.8" height="0.8" fill="#2c2c2c"/>
<rect x="789.7" y="263" width="17" height="190.3" fill="#3c3e3f"/>
<rect x="789.7" y="263" width="1.2" height="190.3" fill="#2a2a2a"/>
<rect x="806.4" y="262.5" width="1" height="191" fill="#262728"/>
<rect x="807.4" y="262.5" width="104" height="190.8" fill="url(#pg)"/>
<rect x="911.2" y="268" width="9.4" height="88" fill="#37393a"/>
<rect x="911.2" y="358.5" width="9.4" height="90.1" fill="#37393a"/>
<rect x="816.5" y="274.9" width="20.5" height="71.9" rx="4.5" fill="none" stroke="#2c2e2f" stroke-width="1.8"/>
<rect x="816.5" y="369.6" width="20.5" height="71.4" rx="4.5" fill="none" stroke="#2c2e2f" stroke-width="1.8"/>
<rect x="840" y="266.5" width="0.8" height="182" fill="#553535"/>
<rect x="840.8" y="266.5" width="7" height="182" fill="rgba(72,74,75,0.5)"/>
<rect x="875.2" y="406.9" width="35.6" height="46" fill="#434546"/>
<rect x="878.0" y="411" width="1" height="34" fill="#393b3c"/>
<rect x="883.0" y="414" width="1" height="28" fill="#393b3c"/>
<rect x="888.0" y="411" width="1" height="22" fill="#393b3c"/>
<rect x="893.0" y="414" width="1" height="34" fill="#393b3c"/>
<rect x="898.0" y="411" width="1" height="28" fill="#393b3c"/>
<rect x="903.0" y="414" width="1" height="22" fill="#393b3c"/>
<circle cx="812" cy="280" r="0.8" fill="#2a2a2a"/>
<circle cx="812" cy="352" r="0.8" fill="#2a2a2a"/>
<circle cx="812" cy="373" r="0.8" fill="#2a2a2a"/>
<circle cx="812" cy="443" r="0.8" fill="#2a2a2a"/>
<circle cx="824" cy="356" r="0.8" fill="#2a2a2a"/>
<circle cx="824" cy="362" r="0.8" fill="#2a2a2a"/>
<circle cx="861" cy="356" r="0.8" fill="#2a2a2a"/>
<circle cx="861" cy="362" r="0.8" fill="#2a2a2a"/>
<circle cx="882" cy="356" r="0.8" fill="#2a2a2a"/>
<circle cx="882" cy="362" r="0.8" fill="#2a2a2a"/>
<circle cx="798.5" cy="277" r="0.8" fill="#2a2a2a"/><defs><linearGradient id="tg" x1="0.6" x2="0.2" y1="0" y2="1"><stop offset="0" stop-color="#3c3c3c"/><stop offset="1" stop-color="#5a5a5a"/></linearGradient></defs>
<path d="M1510,128.8 H1608 L1644,146.9 H1476 Z" fill="url(#tg)"/>
<rect x="1522" y="141" width="0.8" height="0.8" fill="#2a2a2a"/>
<rect x="1540" y="143" width="0.8" height="0.8" fill="#2a2a2a"/>
<rect x="1566" y="143" width="0.8" height="0.8" fill="#2a2a2a"/>
<rect x="1578" y="140" width="0.8" height="0.8" fill="#2a2a2a"/>
<rect x="1597" y="141" width="0.8" height="0.8" fill="#2a2a2a"/>
<rect x="1595" y="144" width="0.8" height="0.8" fill="#2a2a2a"/>
<rect x="1467" y="146.9" width="9" height="65" fill="#1d1d1d"/>
<rect x="1644" y="146.9" width="9.5" height="65" fill="#1d1d1d"/>
<rect x="1469" y="192" width="6" height="16" fill="#121212"/>
<rect x="1645" y="192" width="6" height="16" fill="#121212"/>
<rect x="1468.5" y="152" width="3" height="1" fill="#343434"/>
<rect x="1469.5" y="156" width="4" height="1" fill="#343434"/>
<rect x="1468.5" y="160" width="5" height="1" fill="#343434"/>
<rect x="1469.5" y="163" width="3" height="1" fill="#343434"/>
<rect x="1468.5" y="166" width="4" height="1" fill="#343434"/>
<rect x="1469.5" y="169" width="5" height="1" fill="#343434"/>
<rect x="1646" y="152" width="3" height="1" fill="#343434"/>
<rect x="1647" y="156" width="4" height="1" fill="#343434"/>
<rect x="1646" y="160" width="5" height="1" fill="#343434"/>
<rect x="1647" y="163" width="3" height="1" fill="#343434"/>
<rect x="1646" y="166" width="4" height="1" fill="#343434"/>
<rect x="1647" y="169" width="5" height="1" fill="#343434"/>
<rect x="1476" y="146.9" width="168" height="65.1" fill="#1a1a1a"/>
<rect x="1478.8" y="148.4" width="39.5" height="9.8" fill="#131313"/>
<rect x="1520.6" y="148.4" width="39.5" height="9.8" fill="#131313"/>
<rect x="1562.2" y="148.4" width="39.5" height="9.8" fill="#131313"/>
<rect x="1603.9" y="148.4" width="39.5" height="9.8" fill="#131313"/>
<rect x="1478.8" y="158.8" width="39.5" height="9.8" fill="#131313"/>
<rect x="1520.6" y="158.8" width="39.5" height="9.8" fill="#131313"/>
<rect x="1562.2" y="158.8" width="39.5" height="9.8" fill="#131313"/>
<rect x="1603.9" y="158.8" width="39.5" height="9.8" fill="#131313"/>
<rect x="1478.8" y="169.3" width="39.5" height="9.8" fill="#131313"/>
<rect x="1520.6" y="169.3" width="39.5" height="9.8" fill="#131313"/>
<rect x="1562.2" y="169.3" width="39.5" height="9.8" fill="#131313"/>
<rect x="1603.9" y="169.3" width="39.5" height="9.8" fill="#131313"/>
<rect x="1478.8" y="179.8" width="39.5" height="9.8" fill="#131313"/>
<rect x="1520.6" y="179.8" width="39.5" height="9.8" fill="#131313"/>
<rect x="1562.2" y="179.8" width="39.5" height="9.8" fill="#131313"/>
<rect x="1603.9" y="179.8" width="39.5" height="9.8" fill="#131313"/>
<rect x="1478.8" y="190.20000000000002" width="39.5" height="9.8" fill="#131313"/>
<rect x="1520.6" y="190.20000000000002" width="39.5" height="9.8" fill="#131313"/>
<rect x="1562.2" y="190.20000000000002" width="39.5" height="9.8" fill="#131313"/>
<rect x="1603.9" y="190.20000000000002" width="39.5" height="9.8" fill="#131313"/>
<rect x="1478.8" y="200.70000000000002" width="39.5" height="9.8" fill="#131313"/>
<rect x="1520.6" y="200.70000000000002" width="39.5" height="9.8" fill="#131313"/>
<rect x="1562.2" y="200.70000000000002" width="39.5" height="9.8" fill="#131313"/>
<rect x="1603.9" y="200.70000000000002" width="39.5" height="9.8" fill="#131313"/>
<rect x="1480.8" y="151" width="35.5" height="4.6" fill="#dedede"/>
<rect x="1486.1" y="151" width="0.7" height="4.6" fill="#000" opacity="0.25"/>
<rect x="1522.6" y="151" width="35.5" height="4.6" fill="#dedede"/>
<rect x="1527.8999999999999" y="151" width="0.7" height="4.6" fill="#000" opacity="0.25"/>
<rect x="1564.2" y="151" width="35.5" height="4.6" fill="#00f0ff"/>
<rect x="1569.5" y="151" width="0.7" height="4.6" fill="#000" opacity="0.25"/>
<rect x="1605.9" y="151" width="35.5" height="4.6" fill="#00f0ff"/>
<rect x="1611.2" y="151" width="0.7" height="4.6" fill="#000" opacity="0.25"/>
<rect x="1480.8" y="161.4" width="35.5" height="4.6" fill="#dedede"/>
<rect x="1486.1" y="161.4" width="0.7" height="4.6" fill="#000" opacity="0.25"/>
<rect x="1522.6" y="161.4" width="35.5" height="4.6" fill="#dedede"/>
<rect x="1527.8999999999999" y="161.4" width="0.7" height="4.6" fill="#000" opacity="0.25"/>
<rect x="1564.2" y="161.4" width="35.5" height="4.6" fill="#ffae3d"/>
<rect x="1569.5" y="161.4" width="0.7" height="4.6" fill="#000" opacity="0.25"/>
<rect x="1605.9" y="161.4" width="35.5" height="4.6" fill="#f000f0"/>
<rect x="1611.2" y="161.4" width="0.7" height="4.6" fill="#000" opacity="0.25"/>
<rect x="1480.8" y="171.9" width="35.5" height="4.6" fill="#f000f0"/>
<rect x="1486.1" y="171.9" width="0.7" height="4.6" fill="#000" opacity="0.25"/>
<rect x="1522.6" y="171.9" width="35.5" height="4.6" fill="#ffae3d"/>
<rect x="1527.8999999999999" y="171.9" width="0.7" height="4.6" fill="#000" opacity="0.25"/>
<rect x="1564.2" y="171.9" width="35.5" height="4.6" fill="#00b2f5"/>
<rect x="1569.5" y="171.9" width="0.7" height="4.6" fill="#000" opacity="0.25"/>
<rect x="1605.9" y="171.9" width="35.5" height="4.6" fill="#747474"/>
<rect x="1611.2" y="171.9" width="0.7" height="4.6" fill="#000" opacity="0.25"/>
<rect x="1480.8" y="182.4" width="35.5" height="4.6" fill="#747474"/>
<rect x="1486.1" y="182.4" width="0.7" height="4.6" fill="#000" opacity="0.25"/>
<rect x="1522.6" y="182.4" width="35.5" height="4.6" fill="#747474"/>
<rect x="1527.8999999999999" y="182.4" width="0.7" height="4.6" fill="#000" opacity="0.25"/>
<rect x="1564.2" y="182.4" width="35.5" height="4.6" fill="#747474"/>
<rect x="1569.5" y="182.4" width="0.7" height="4.6" fill="#000" opacity="0.25"/>
<rect x="1605.9" y="182.4" width="35.5" height="4.6" fill="#747474"/>
<rect x="1611.2" y="182.4" width="0.7" height="4.6" fill="#000" opacity="0.25"/>
<rect x="1480.8" y="192.8" width="35.5" height="4.6" fill="#747474"/>
<rect x="1486.1" y="192.8" width="0.7" height="4.6" fill="#000" opacity="0.25"/>
<rect x="1522.6" y="192.8" width="35.5" height="4.6" fill="#747474"/>
<rect x="1527.8999999999999" y="192.8" width="0.7" height="4.6" fill="#000" opacity="0.25"/>
<rect x="1564.2" y="192.8" width="35.5" height="4.6" fill="#747474"/>
<rect x="1569.5" y="192.8" width="0.7" height="4.6" fill="#000" opacity="0.25"/>
<rect x="1605.9" y="192.8" width="35.5" height="4.6" fill="#747474"/>
<rect x="1611.2" y="192.8" width="0.7" height="4.6" fill="#000" opacity="0.25"/>
<rect x="1480.8" y="203.3" width="35.5" height="4.6" fill="#747474"/>
<rect x="1486.1" y="203.3" width="0.7" height="4.6" fill="#000" opacity="0.25"/>
<rect x="1522.6" y="203.3" width="35.5" height="4.6" fill="#747474"/>
<rect x="1527.8999999999999" y="203.3" width="0.7" height="4.6" fill="#000" opacity="0.25"/>
<rect x="1564.2" y="203.3" width="35.5" height="4.6" fill="#747474"/>
<rect x="1569.5" y="203.3" width="0.7" height="4.6" fill="#000" opacity="0.25"/>
<rect x="1605.9" y="203.3" width="35.5" height="4.6" fill="#747474"/>
<rect x="1611.2" y="203.3" width="0.7" height="4.6" fill="#000" opacity="0.25"/><g transform="translate(1228.351,174.531) scale(0.463)"><path d="M519,262 l2,-6 l6,-2 l4,3 l-1,5z" fill="none" stroke="#333" stroke-width="1"/>
<path d="M519,454 l2,6 l6,2 l4,-3 l-1,-5z" fill="none" stroke="#333" stroke-width="1"/>
<path d="M523,342.5 h-5 q-2.5,0 -2.5,2.5 v25 q0,2.5 2.5,2.5 h5" fill="none" stroke="#303030" stroke-width="1.6"/>
<rect x="523" y="263" width="267" height="190" fill="#171717"/>
<rect x="523" y="263" width="267" height="1.6" fill="#303030"/>
<rect x="523" y="451.4" width="267" height="1.6" fill="#2a2a2a"/>
<rect x="523" y="263" width="4" height="190" fill="#303030"/>
<rect x="537.40" y="268.90" width="31.6" height="14.0" fill="#68b244"/>
<rect x="538.40" y="268.90" width="6.8" height="14.0" fill="#6cb848"/>
<rect x="537.40" y="268.90" width="1" height="14.0" fill="#3e7a28"/>
<path d="M570.80,271.60 L577.20,275.90 L570.80,280.20Z" fill="#2a2f36"/>
<rect x="579.70" y="270.90" width="0.8" height="0.8" fill="#2c2c2c"/>
<rect x="579.70" y="275.90" width="0.8" height="0.8" fill="#2c2c2c"/>
<rect x="579.70" y="280.90" width="0.8" height="0.8" fill="#2c2c2c"/>
<rect x="537.40" y="283.83" width="31.6" height="14.0" fill="#68b244"/>
<rect x="538.40" y="283.83" width="6.8" height="14.0" fill="#6cb848"/>
<rect x="537.40" y="283.83" width="1" height="14.0" fill="#3e7a28"/>
<path d="M570.80,286.53 L577.20,290.83 L570.80,295.13Z" fill="#2a2f36"/>
<rect x="579.70" y="285.83" width="0.8" height="0.8" fill="#2c2c2c"/>
<rect x="579.70" y="290.83" width="0.8" height="0.8" fill="#2c2c2c"/>
<rect x="579.70" y="295.83" width="0.8" height="0.8" fill="#2c2c2c"/>
<rect x="537.40" y="298.76" width="31.6" height="14.0" fill="#68b244"/>
<rect x="538.40" y="298.76" width="6.8" height="14.0" fill="#6cb848"/>
<rect x="537.40" y="298.76" width="1" height="14.0" fill="#3e7a28"/>
<path d="M570.80,301.46 L577.20,305.76 L570.80,310.06Z" fill="#2a2f36"/>
<rect x="579.70" y="300.76" width="0.8" height="0.8" fill="#2c2c2c"/>
<rect x="579.70" y="305.76" width="0.8" height="0.8" fill="#2c2c2c"/>
<rect x="579.70" y="310.76" width="0.8" height="0.8" fill="#2c2c2c"/>
<rect x="537.40" y="313.69" width="31.6" height="14.0" fill="#68b244"/>
<rect x="538.40" y="313.69" width="6.8" height="14.0" fill="#6cb848"/>
<rect x="537.40" y="313.69" width="1" height="14.0" fill="#3e7a28"/>
<path d="M570.80,316.39 L577.20,320.69 L570.80,324.99Z" fill="#2a2f36"/>
<rect x="579.70" y="315.69" width="0.8" height="0.8" fill="#2c2c2c"/>
<rect x="579.70" y="320.69" width="0.8" height="0.8" fill="#2c2c2c"/>
<rect x="579.70" y="325.69" width="0.8" height="0.8" fill="#2c2c2c"/>
<rect x="537.40" y="328.62" width="31.6" height="14.0" fill="#68b244"/>
<rect x="538.40" y="328.62" width="6.8" height="14.0" fill="#6cb848"/>
<rect x="537.40" y="328.62" width="1" height="14.0" fill="#3e7a28"/>
<path d="M570.80,331.32 L577.20,335.62 L570.80,339.92Z" fill="#2a2f36"/>
<rect x="579.70" y="330.62" width="0.8" height="0.8" fill="#2c2c2c"/>
<rect x="579.70" y="335.62" width="0.8" height="0.8" fill="#2c2c2c"/>
<rect x="579.70" y="340.62" width="0.8" height="0.8" fill="#2c2c2c"/>
<rect x="537.40" y="343.55" width="31.6" height="14.0" fill="#68b244"/>
<rect x="538.40" y="343.55" width="6.8" height="14.0" fill="#6cb848"/>
<rect x="537.40" y="343.55" width="1" height="14.0" fill="#3e7a28"/>
<path d="M570.80,346.25 L577.20,350.55 L570.80,354.85Z" fill="#2a2f36"/>
<rect x="579.70" y="345.55" width="0.8" height="0.8" fill="#2c2c2c"/>
<rect x="579.70" y="350.55" width="0.8" height="0.8" fill="#2c2c2c"/>
<rect x="579.70" y="355.55" width="0.8" height="0.8" fill="#2c2c2c"/>
<rect x="537.40" y="358.48" width="31.6" height="14.0" fill="#68b244"/>
<rect x="538.40" y="358.48" width="6.8" height="14.0" fill="#6cb848"/>
<rect x="537.40" y="358.48" width="1" height="14.0" fill="#3e7a28"/>
<path d="M570.80,361.18 L577.20,365.48 L570.80,369.78Z" fill="#2a2f36"/>
<rect x="579.70" y="360.48" width="0.8" height="0.8" fill="#2c2c2c"/>
<rect x="579.70" y="365.48" width="0.8" height="0.8" fill="#2c2c2c"/>
<rect x="579.70" y="370.48" width="0.8" height="0.8" fill="#2c2c2c"/>
<rect x="537.40" y="373.41" width="31.6" height="14.0" fill="#68b244"/>
<rect x="538.40" y="373.41" width="6.8" height="14.0" fill="#6cb848"/>
<rect x="537.40" y="373.41" width="1" height="14.0" fill="#3e7a28"/>
<path d="M570.80,376.11 L577.20,380.41 L570.80,384.71Z" fill="#2a2f36"/>
<rect x="579.70" y="375.41" width="0.8" height="0.8" fill="#2c2c2c"/>
<rect x="579.70" y="380.41" width="0.8" height="0.8" fill="#2c2c2c"/>
<rect x="579.70" y="385.41" width="0.8" height="0.8" fill="#2c2c2c"/>
<rect x="537.40" y="388.34" width="31.6" height="14.0" fill="#68b244"/>
<rect x="538.40" y="388.34" width="6.8" height="14.0" fill="#6cb848"/>
<rect x="537.40" y="388.34" width="1" height="14.0" fill="#3e7a28"/>
<path d="M570.80,391.04 L577.20,395.34 L570.80,399.64Z" fill="#2a2f36"/>
<rect x="579.70" y="390.34" width="0.8" height="0.8" fill="#2c2c2c"/>
<rect x="579.70" y="395.34" width="0.8" height="0.8" fill="#2c2c2c"/>
<rect x="579.70" y="400.34" width="0.8" height="0.8" fill="#2c2c2c"/>
<rect x="537.40" y="403.27" width="31.6" height="14.0" fill="#68b244"/>
<rect x="538.40" y="403.27" width="6.8" height="14.0" fill="#6cb848"/>
<rect x="537.40" y="403.27" width="1" height="14.0" fill="#3e7a28"/>
<path d="M570.80,405.97 L577.20,410.27 L570.80,414.57Z" fill="#2a2f36"/>
<rect x="579.70" y="405.27" width="0.8" height="0.8" fill="#2c2c2c"/>
<rect x="579.70" y="410.27" width="0.8" height="0.8" fill="#2c2c2c"/>
<rect x="579.70" y="415.27" width="0.8" height="0.8" fill="#2c2c2c"/>
<rect x="537.40" y="418.20" width="31.6" height="14.0" fill="#68b244"/>
<rect x="538.40" y="418.20" width="6.8" height="14.0" fill="#6cb848"/>
<rect x="537.40" y="418.20" width="1" height="14.0" fill="#3e7a28"/>
<path d="M570.80,420.90 L577.20,425.20 L570.80,429.50Z" fill="#2a2f36"/>
<rect x="579.70" y="420.20" width="0.8" height="0.8" fill="#2c2c2c"/>
<rect x="579.70" y="425.20" width="0.8" height="0.8" fill="#2c2c2c"/>
<rect x="579.70" y="430.20" width="0.8" height="0.8" fill="#2c2c2c"/>
<rect x="537.40" y="433.13" width="31.6" height="14.0" fill="#68b244"/>
<rect x="538.40" y="433.13" width="6.8" height="14.0" fill="#6cb848"/>
<rect x="537.40" y="433.13" width="1" height="14.0" fill="#3e7a28"/>
<path d="M570.80,435.83 L577.20,440.13 L570.80,444.43Z" fill="#2a2f36"/>
<rect x="579.70" y="435.13" width="0.8" height="0.8" fill="#2c2c2c"/>
<rect x="579.70" y="440.13" width="0.8" height="0.8" fill="#2c2c2c"/>
<rect x="579.70" y="445.13" width="0.8" height="0.8" fill="#2c2c2c"/>
<rect x="585.90" y="268.90" width="31.6" height="14.0" fill="#68b244"/>
<rect x="586.90" y="268.90" width="6.8" height="14.0" fill="#6cb848"/>
<rect x="585.90" y="268.90" width="1" height="14.0" fill="#3e7a28"/>
<path d="M619.30,271.60 L625.70,275.90 L619.30,280.20Z" fill="#2a2f36"/>
<rect x="628.20" y="270.90" width="0.8" height="0.8" fill="#2c2c2c"/>
<rect x="628.20" y="275.90" width="0.8" height="0.8" fill="#2c2c2c"/>
<rect x="628.20" y="280.90" width="0.8" height="0.8" fill="#2c2c2c"/>
<rect x="585.90" y="283.83" width="31.6" height="14.0" fill="#68b244"/>
<rect x="586.90" y="283.83" width="6.8" height="14.0" fill="#6cb848"/>
<rect x="585.90" y="283.83" width="1" height="14.0" fill="#3e7a28"/>
<path d="M619.30,286.53 L625.70,290.83 L619.30,295.13Z" fill="#2a2f36"/>
<rect x="628.20" y="285.83" width="0.8" height="0.8" fill="#2c2c2c"/>
<rect x="628.20" y="290.83" width="0.8" height="0.8" fill="#2c2c2c"/>
<rect x="628.20" y="295.83" width="0.8" height="0.8" fill="#2c2c2c"/>
<rect x="585.90" y="298.76" width="31.6" height="14.0" fill="#68b244"/>
<rect x="586.90" y="298.76" width="6.8" height="14.0" fill="#6cb848"/>
<rect x="585.90" y="298.76" width="1" height="14.0" fill="#3e7a28"/>
<path d="M619.30,301.46 L625.70,305.76 L619.30,310.06Z" fill="#2a2f36"/>
<rect x="628.20" y="300.76" width="0.8" height="0.8" fill="#2c2c2c"/>
<rect x="628.20" y="305.76" width="0.8" height="0.8" fill="#2c2c2c"/>
<rect x="628.20" y="310.76" width="0.8" height="0.8" fill="#2c2c2c"/>
<rect x="585.90" y="313.69" width="31.6" height="14.0" fill="#68b244"/>
<rect x="586.90" y="313.69" width="6.8" height="14.0" fill="#6cb848"/>
<rect x="585.90" y="313.69" width="1" height="14.0" fill="#3e7a28"/>
<path d="M619.30,316.39 L625.70,320.69 L619.30,324.99Z" fill="#2a2f36"/>
<rect x="628.20" y="315.69" width="0.8" height="0.8" fill="#2c2c2c"/>
<rect x="628.20" y="320.69" width="0.8" height="0.8" fill="#2c2c2c"/>
<rect x="628.20" y="325.69" width="0.8" height="0.8" fill="#2c2c2c"/>
<rect x="585.90" y="328.62" width="31.6" height="14.0" fill="#68b244"/>
<rect x="586.90" y="328.62" width="6.8" height="14.0" fill="#6cb848"/>
<rect x="585.90" y="328.62" width="1" height="14.0" fill="#3e7a28"/>
<path d="M619.30,331.32 L625.70,335.62 L619.30,339.92Z" fill="#2a2f36"/>
<rect x="628.20" y="330.62" width="0.8" height="0.8" fill="#2c2c2c"/>
<rect x="628.20" y="335.62" width="0.8" height="0.8" fill="#2c2c2c"/>
<rect x="628.20" y="340.62" width="0.8" height="0.8" fill="#2c2c2c"/>
<rect x="585.90" y="343.55" width="31.6" height="14.0" fill="#68b244"/>
<rect x="586.90" y="343.55" width="6.8" height="14.0" fill="#6cb848"/>
<rect x="585.90" y="343.55" width="1" height="14.0" fill="#3e7a28"/>
<path d="M619.30,346.25 L625.70,350.55 L619.30,354.85Z" fill="#2a2f36"/>
<rect x="628.20" y="345.55" width="0.8" height="0.8" fill="#2c2c2c"/>
<rect x="628.20" y="350.55" width="0.8" height="0.8" fill="#2c2c2c"/>
<rect x="628.20" y="355.55" width="0.8" height="0.8" fill="#2c2c2c"/>
<rect x="585.90" y="358.48" width="31.6" height="14.0" fill="#68b244"/>
<rect x="586.90" y="358.48" width="6.8" height="14.0" fill="#6cb848"/>
<rect x="585.90" y="358.48" width="1" height="14.0" fill="#3e7a28"/>
<path d="M619.30,361.18 L625.70,365.48 L619.30,369.78Z" fill="#2a2f36"/>
<rect x="628.20" y="360.48" width="0.8" height="0.8" fill="#2c2c2c"/>
<rect x="628.20" y="365.48" width="0.8" height="0.8" fill="#2c2c2c"/>
<rect x="628.20" y="370.48" width="0.8" height="0.8" fill="#2c2c2c"/>
<rect x="585.90" y="373.41" width="31.6" height="14.0" fill="#68b244"/>
<rect x="586.90" y="373.41" width="6.8" height="14.0" fill="#6cb848"/>
<rect x="585.90" y="373.41" width="1" height="14.0" fill="#3e7a28"/>
<path d="M619.30,376.11 L625.70,380.41 L619.30,384.71Z" fill="#2a2f36"/>
<rect x="628.20" y="375.41" width="0.8" height="0.8" fill="#2c2c2c"/>
<rect x="628.20" y="380.41" width="0.8" height="0.8" fill="#2c2c2c"/>
<rect x="628.20" y="385.41" width="0.8" height="0.8" fill="#2c2c2c"/>
<rect x="585.90" y="388.34" width="31.6" height="14.0" fill="#68b244"/>
<rect x="586.90" y="388.34" width="6.8" height="14.0" fill="#6cb848"/>
<rect x="585.90" y="388.34" width="1" height="14.0" fill="#3e7a28"/>
<path d="M619.30,391.04 L625.70,395.34 L619.30,399.64Z" fill="#2a2f36"/>
<rect x="628.20" y="390.34" width="0.8" height="0.8" fill="#2c2c2c"/>
<rect x="628.20" y="395.34" width="0.8" height="0.8" fill="#2c2c2c"/>
<rect x="628.20" y="400.34" width="0.8" height="0.8" fill="#2c2c2c"/>
<rect x="585.90" y="403.27" width="31.6" height="14.0" fill="#68b244"/>
<rect x="586.90" y="403.27" width="6.8" height="14.0" fill="#6cb848"/>
<rect x="585.90" y="403.27" width="1" height="14.0" fill="#3e7a28"/>
<path d="M619.30,405.97 L625.70,410.27 L619.30,414.57Z" fill="#2a2f36"/>
<rect x="628.20" y="405.27" width="0.8" height="0.8" fill="#2c2c2c"/>
<rect x="628.20" y="410.27" width="0.8" height="0.8" fill="#2c2c2c"/>
<rect x="628.20" y="415.27" width="0.8" height="0.8" fill="#2c2c2c"/>
<rect x="585.90" y="418.20" width="31.6" height="14.0" fill="#68b244"/>
<rect x="586.90" y="418.20" width="6.8" height="14.0" fill="#6cb848"/>
<rect x="585.90" y="418.20" width="1" height="14.0" fill="#3e7a28"/>
<path d="M619.30,420.90 L625.70,425.20 L619.30,429.50Z" fill="#2a2f36"/>
<rect x="628.20" y="420.20" width="0.8" height="0.8" fill="#2c2c2c"/>
<rect x="628.20" y="425.20" width="0.8" height="0.8" fill="#2c2c2c"/>
<rect x="628.20" y="430.20" width="0.8" height="0.8" fill="#2c2c2c"/>
<rect x="585.90" y="433.13" width="31.6" height="14.0" fill="#68b244"/>
<rect x="586.90" y="433.13" width="6.8" height="14.0" fill="#6cb848"/>
<rect x="585.90" y="433.13" width="1" height="14.0" fill="#3e7a28"/>
<path d="M619.30,435.83 L625.70,440.13 L619.30,444.43Z" fill="#2a2f36"/>
<rect x="628.20" y="435.13" width="0.8" height="0.8" fill="#2c2c2c"/>
<rect x="628.20" y="440.13" width="0.8" height="0.8" fill="#2c2c2c"/>
<rect x="628.20" y="445.13" width="0.8" height="0.8" fill="#2c2c2c"/>
<rect x="634.40" y="268.90" width="31.6" height="14.0" fill="#68b244"/>
<rect x="635.40" y="268.90" width="6.8" height="14.0" fill="#6cb848"/>
<rect x="634.40" y="268.90" width="1" height="14.0" fill="#3e7a28"/>
<path d="M667.80,271.60 L674.20,275.90 L667.80,280.20Z" fill="#2a2f36"/>
<rect x="676.70" y="270.90" width="0.8" height="0.8" fill="#2c2c2c"/>
<rect x="676.70" y="275.90" width="0.8" height="0.8" fill="#2c2c2c"/>
<rect x="676.70" y="280.90" width="0.8" height="0.8" fill="#2c2c2c"/>
<rect x="634.40" y="283.83" width="31.6" height="14.0" fill="#68b244"/>
<rect x="635.40" y="283.83" width="6.8" height="14.0" fill="#6cb848"/>
<rect x="634.40" y="283.83" width="1" height="14.0" fill="#3e7a28"/>
<path d="M667.80,286.53 L674.20,290.83 L667.80,295.13Z" fill="#2a2f36"/>
<rect x="676.70" y="285.83" width="0.8" height="0.8" fill="#2c2c2c"/>
<rect x="676.70" y="290.83" width="0.8" height="0.8" fill="#2c2c2c"/>
<rect x="676.70" y="295.83" width="0.8" height="0.8" fill="#2c2c2c"/>
<rect x="634.40" y="298.76" width="31.6" height="14.0" fill="#68b244"/>
<rect x="635.40" y="298.76" width="6.8" height="14.0" fill="#6cb848"/>
<rect x="634.40" y="298.76" width="1" height="14.0" fill="#3e7a28"/>
<path d="M667.80,301.46 L674.20,305.76 L667.80,310.06Z" fill="#2a2f36"/>
<rect x="676.70" y="300.76" width="0.8" height="0.8" fill="#2c2c2c"/>
<rect x="676.70" y="305.76" width="0.8" height="0.8" fill="#2c2c2c"/>
<rect x="676.70" y="310.76" width="0.8" height="0.8" fill="#2c2c2c"/>
<rect x="634.40" y="313.69" width="31.6" height="14.0" fill="#68b244"/>
<rect x="635.40" y="313.69" width="6.8" height="14.0" fill="#6cb848"/>
<rect x="634.40" y="313.69" width="1" height="14.0" fill="#3e7a28"/>
<path d="M667.80,316.39 L674.20,320.69 L667.80,324.99Z" fill="#2a2f36"/>
<rect x="676.70" y="315.69" width="0.8" height="0.8" fill="#2c2c2c"/>
<rect x="676.70" y="320.69" width="0.8" height="0.8" fill="#2c2c2c"/>
<rect x="676.70" y="325.69" width="0.8" height="0.8" fill="#2c2c2c"/>
<rect x="634.40" y="328.62" width="31.6" height="14.0" fill="#68b244"/>
<rect x="635.40" y="328.62" width="6.8" height="14.0" fill="#6cb848"/>
<rect x="634.40" y="328.62" width="1" height="14.0" fill="#3e7a28"/>
<path d="M667.80,331.32 L674.20,335.62 L667.80,339.92Z" fill="#2a2f36"/>
<rect x="676.70" y="330.62" width="0.8" height="0.8" fill="#2c2c2c"/>
<rect x="676.70" y="335.62" width="0.8" height="0.8" fill="#2c2c2c"/>
<rect x="676.70" y="340.62" width="0.8" height="0.8" fill="#2c2c2c"/>
<rect x="634.40" y="343.55" width="31.6" height="14.0" fill="#68b244"/>
<rect x="635.40" y="343.55" width="6.8" height="14.0" fill="#6cb848"/>
<rect x="634.40" y="343.55" width="1" height="14.0" fill="#3e7a28"/>
<path d="M667.80,346.25 L674.20,350.55 L667.80,354.85Z" fill="#2a2f36"/>
<rect x="676.70" y="345.55" width="0.8" height="0.8" fill="#2c2c2c"/>
<rect x="676.70" y="350.55" width="0.8" height="0.8" fill="#2c2c2c"/>
<rect x="676.70" y="355.55" width="0.8" height="0.8" fill="#2c2c2c"/>
<rect x="634.40" y="358.48" width="31.6" height="14.0" fill="#68b244"/>
<rect x="635.40" y="358.48" width="6.8" height="14.0" fill="#6cb848"/>
<rect x="634.40" y="358.48" width="1" height="14.0" fill="#3e7a28"/>
<path d="M667.80,361.18 L674.20,365.48 L667.80,369.78Z" fill="#2a2f36"/>
<rect x="676.70" y="360.48" width="0.8" height="0.8" fill="#2c2c2c"/>
<rect x="676.70" y="365.48" width="0.8" height="0.8" fill="#2c2c2c"/>
<rect x="676.70" y="370.48" width="0.8" height="0.8" fill="#2c2c2c"/>
<rect x="634.40" y="373.41" width="31.6" height="14.0" fill="#68b244"/>
<rect x="635.40" y="373.41" width="6.8" height="14.0" fill="#6cb848"/>
<rect x="634.40" y="373.41" width="1" height="14.0" fill="#3e7a28"/>
<path d="M667.80,376.11 L674.20,380.41 L667.80,384.71Z" fill="#2a2f36"/>
<rect x="676.70" y="375.41" width="0.8" height="0.8" fill="#2c2c2c"/>
<rect x="676.70" y="380.41" width="0.8" height="0.8" fill="#2c2c2c"/>
<rect x="676.70" y="385.41" width="0.8" height="0.8" fill="#2c2c2c"/>
<rect x="634.40" y="388.34" width="31.6" height="14.0" fill="#68b244"/>
<rect x="635.40" y="388.34" width="6.8" height="14.0" fill="#6cb848"/>
<rect x="634.40" y="388.34" width="1" height="14.0" fill="#3e7a28"/>
<path d="M667.80,391.04 L674.20,395.34 L667.80,399.64Z" fill="#2a2f36"/>
<rect x="676.70" y="390.34" width="0.8" height="0.8" fill="#2c2c2c"/>
<rect x="676.70" y="395.34" width="0.8" height="0.8" fill="#2c2c2c"/>
<rect x="676.70" y="400.34" width="0.8" height="0.8" fill="#2c2c2c"/>
<rect x="634.40" y="403.27" width="31.6" height="14.0" fill="#68b244"/>
<rect x="635.40" y="403.27" width="6.8" height="14.0" fill="#6cb848"/>
<rect x="634.40" y="403.27" width="1" height="14.0" fill="#3e7a28"/>
<path d="M667.80,405.97 L674.20,410.27 L667.80,414.57Z" fill="#2a2f36"/>
<rect x="676.70" y="405.27" width="0.8" height="0.8" fill="#2c2c2c"/>
<rect x="676.70" y="410.27" width="0.8" height="0.8" fill="#2c2c2c"/>
<rect x="676.70" y="415.27" width="0.8" height="0.8" fill="#2c2c2c"/>
<rect x="634.40" y="418.20" width="31.6" height="14.0" fill="#68b244"/>
<rect x="635.40" y="418.20" width="6.8" height="14.0" fill="#6cb848"/>
<rect x="634.40" y="418.20" width="1" height="14.0" fill="#3e7a28"/>
<path d="M667.80,420.90 L674.20,425.20 L667.80,429.50Z" fill="#2a2f36"/>
<rect x="676.70" y="420.20" width="0.8" height="0.8" fill="#2c2c2c"/>
<rect x="676.70" y="425.20" width="0.8" height="0.8" fill="#2c2c2c"/>
<rect x="676.70" y="430.20" width="0.8" height="0.8" fill="#2c2c2c"/>
<rect x="634.40" y="433.13" width="31.6" height="14.0" fill="#68b244"/>
<rect x="635.40" y="433.13" width="6.8" height="14.0" fill="#6cb848"/>
<rect x="634.40" y="433.13" width="1" height="14.0" fill="#3e7a28"/>
<path d="M667.80,435.83 L674.20,440.13 L667.80,444.43Z" fill="#2a2f36"/>
<rect x="676.70" y="435.13" width="0.8" height="0.8" fill="#2c2c2c"/>
<rect x="676.70" y="440.13" width="0.8" height="0.8" fill="#2c2c2c"/>
<rect x="676.70" y="445.13" width="0.8" height="0.8" fill="#2c2c2c"/>
<rect x="682.90" y="268.90" width="31.6" height="14.0" fill="#68b244"/>
<rect x="683.90" y="268.90" width="6.8" height="14.0" fill="#6cb848"/>
<rect x="682.90" y="268.90" width="1" height="14.0" fill="#3e7a28"/>
<path d="M716.30,271.60 L722.70,275.90 L716.30,280.20Z" fill="#2a2f36"/>
<rect x="725.20" y="270.90" width="0.8" height="0.8" fill="#2c2c2c"/>
<rect x="725.20" y="275.90" width="0.8" height="0.8" fill="#2c2c2c"/>
<rect x="725.20" y="280.90" width="0.8" height="0.8" fill="#2c2c2c"/>
<rect x="682.90" y="283.83" width="31.6" height="14.0" fill="#68b244"/>
<rect x="683.90" y="283.83" width="6.8" height="14.0" fill="#6cb848"/>
<rect x="682.90" y="283.83" width="1" height="14.0" fill="#3e7a28"/>
<path d="M716.30,286.53 L722.70,290.83 L716.30,295.13Z" fill="#2a2f36"/>
<rect x="725.20" y="285.83" width="0.8" height="0.8" fill="#2c2c2c"/>
<rect x="725.20" y="290.83" width="0.8" height="0.8" fill="#2c2c2c"/>
<rect x="725.20" y="295.83" width="0.8" height="0.8" fill="#2c2c2c"/>
<rect x="682.90" y="298.76" width="31.6" height="14.0" fill="#68b244"/>
<rect x="683.90" y="298.76" width="6.8" height="14.0" fill="#6cb848"/>
<rect x="682.90" y="298.76" width="1" height="14.0" fill="#3e7a28"/>
<path d="M716.30,301.46 L722.70,305.76 L716.30,310.06Z" fill="#2a2f36"/>
<rect x="725.20" y="300.76" width="0.8" height="0.8" fill="#2c2c2c"/>
<rect x="725.20" y="305.76" width="0.8" height="0.8" fill="#2c2c2c"/>
<rect x="725.20" y="310.76" width="0.8" height="0.8" fill="#2c2c2c"/>
<rect x="682.90" y="313.69" width="31.6" height="14.0" fill="#68b244"/>
<rect x="683.90" y="313.69" width="6.8" height="14.0" fill="#6cb848"/>
<rect x="682.90" y="313.69" width="1" height="14.0" fill="#3e7a28"/>
<path d="M716.30,316.39 L722.70,320.69 L716.30,324.99Z" fill="#2a2f36"/>
<rect x="725.20" y="315.69" width="0.8" height="0.8" fill="#2c2c2c"/>
<rect x="725.20" y="320.69" width="0.8" height="0.8" fill="#2c2c2c"/>
<rect x="725.20" y="325.69" width="0.8" height="0.8" fill="#2c2c2c"/>
<rect x="682.90" y="328.62" width="31.6" height="14.0" fill="#68b244"/>
<rect x="683.90" y="328.62" width="6.8" height="14.0" fill="#6cb848"/>
<rect x="682.90" y="328.62" width="1" height="14.0" fill="#3e7a28"/>
<path d="M716.30,331.32 L722.70,335.62 L716.30,339.92Z" fill="#2a2f36"/>
<rect x="725.20" y="330.62" width="0.8" height="0.8" fill="#2c2c2c"/>
<rect x="725.20" y="335.62" width="0.8" height="0.8" fill="#2c2c2c"/>
<rect x="725.20" y="340.62" width="0.8" height="0.8" fill="#2c2c2c"/>
<rect x="682.90" y="343.55" width="31.6" height="14.0" fill="#68b244"/>
<rect x="683.90" y="343.55" width="6.8" height="14.0" fill="#6cb848"/>
<rect x="682.90" y="343.55" width="1" height="14.0" fill="#3e7a28"/>
<path d="M716.30,346.25 L722.70,350.55 L716.30,354.85Z" fill="#2a2f36"/>
<rect x="725.20" y="345.55" width="0.8" height="0.8" fill="#2c2c2c"/>
<rect x="725.20" y="350.55" width="0.8" height="0.8" fill="#2c2c2c"/>
<rect x="725.20" y="355.55" width="0.8" height="0.8" fill="#2c2c2c"/>
<rect x="682.90" y="358.48" width="31.6" height="14.0" fill="#68b244"/>
<rect x="683.90" y="358.48" width="6.8" height="14.0" fill="#6cb848"/>
<rect x="682.90" y="358.48" width="1" height="14.0" fill="#3e7a28"/>
<path d="M716.30,361.18 L722.70,365.48 L716.30,369.78Z" fill="#2a2f36"/>
<rect x="725.20" y="360.48" width="0.8" height="0.8" fill="#2c2c2c"/>
<rect x="725.20" y="365.48" width="0.8" height="0.8" fill="#2c2c2c"/>
<rect x="725.20" y="370.48" width="0.8" height="0.8" fill="#2c2c2c"/>
<rect x="682.90" y="373.41" width="31.6" height="14.0" fill="#68b244"/>
<rect x="683.90" y="373.41" width="6.8" height="14.0" fill="#6cb848"/>
<rect x="682.90" y="373.41" width="1" height="14.0" fill="#3e7a28"/>
<path d="M716.30,376.11 L722.70,380.41 L716.30,384.71Z" fill="#2a2f36"/>
<rect x="725.20" y="375.41" width="0.8" height="0.8" fill="#2c2c2c"/>
<rect x="725.20" y="380.41" width="0.8" height="0.8" fill="#2c2c2c"/>
<rect x="725.20" y="385.41" width="0.8" height="0.8" fill="#2c2c2c"/>
<rect x="682.90" y="388.34" width="31.6" height="14.0" fill="#68b244"/>
<rect x="683.90" y="388.34" width="6.8" height="14.0" fill="#6cb848"/>
<rect x="682.90" y="388.34" width="1" height="14.0" fill="#3e7a28"/>
<path d="M716.30,391.04 L722.70,395.34 L716.30,399.64Z" fill="#2a2f36"/>
<rect x="725.20" y="390.34" width="0.8" height="0.8" fill="#2c2c2c"/>
<rect x="725.20" y="395.34" width="0.8" height="0.8" fill="#2c2c2c"/>
<rect x="725.20" y="400.34" width="0.8" height="0.8" fill="#2c2c2c"/>
<rect x="682.90" y="403.27" width="31.6" height="14.0" fill="#68b244"/>
<rect x="683.90" y="403.27" width="6.8" height="14.0" fill="#6cb848"/>
<rect x="682.90" y="403.27" width="1" height="14.0" fill="#3e7a28"/>
<path d="M716.30,405.97 L722.70,410.27 L716.30,414.57Z" fill="#2a2f36"/>
<rect x="725.20" y="405.27" width="0.8" height="0.8" fill="#2c2c2c"/>
<rect x="725.20" y="410.27" width="0.8" height="0.8" fill="#2c2c2c"/>
<rect x="725.20" y="415.27" width="0.8" height="0.8" fill="#2c2c2c"/>
<rect x="682.90" y="418.20" width="31.6" height="14.0" fill="#68b244"/>
<rect x="683.90" y="418.20" width="6.8" height="14.0" fill="#6cb848"/>
<rect x="682.90" y="418.20" width="1" height="14.0" fill="#3e7a28"/>
<path d="M716.30,420.90 L722.70,425.20 L716.30,429.50Z" fill="#2a2f36"/>
<rect x="725.20" y="420.20" width="0.8" height="0.8" fill="#2c2c2c"/>
<rect x="725.20" y="425.20" width="0.8" height="0.8" fill="#2c2c2c"/>
<rect x="725.20" y="430.20" width="0.8" height="0.8" fill="#2c2c2c"/>
<rect x="682.90" y="433.13" width="31.6" height="14.0" fill="#68b244"/>
<rect x="683.90" y="433.13" width="6.8" height="14.0" fill="#6cb848"/>
<rect x="682.90" y="433.13" width="1" height="14.0" fill="#3e7a28"/>
<path d="M716.30,435.83 L722.70,440.13 L716.30,444.43Z" fill="#2a2f36"/>
<rect x="725.20" y="435.13" width="0.8" height="0.8" fill="#2c2c2c"/>
<rect x="725.20" y="440.13" width="0.8" height="0.8" fill="#2c2c2c"/>
<rect x="725.20" y="445.13" width="0.8" height="0.8" fill="#2c2c2c"/>
<rect x="731.40" y="268.90" width="31.6" height="14.0" fill="#68b244"/>
<rect x="732.40" y="268.90" width="6.8" height="14.0" fill="#6cb848"/>
<rect x="731.40" y="268.90" width="1" height="14.0" fill="#3e7a28"/>
<path d="M764.80,271.60 L771.20,275.90 L764.80,280.20Z" fill="#2a2f36"/>
<rect x="773.70" y="270.90" width="0.8" height="0.8" fill="#2c2c2c"/>
<rect x="773.70" y="275.90" width="0.8" height="0.8" fill="#2c2c2c"/>
<rect x="773.70" y="280.90" width="0.8" height="0.8" fill="#2c2c2c"/>
<rect x="731.40" y="283.83" width="31.6" height="14.0" fill="#68b244"/>
<rect x="732.40" y="283.83" width="6.8" height="14.0" fill="#6cb848"/>
<rect x="731.40" y="283.83" width="1" height="14.0" fill="#3e7a28"/>
<path d="M764.80,286.53 L771.20,290.83 L764.80,295.13Z" fill="#2a2f36"/>
<rect x="773.70" y="285.83" width="0.8" height="0.8" fill="#2c2c2c"/>
<rect x="773.70" y="290.83" width="0.8" height="0.8" fill="#2c2c2c"/>
<rect x="773.70" y="295.83" width="0.8" height="0.8" fill="#2c2c2c"/>
<rect x="731.40" y="298.76" width="31.6" height="14.0" fill="#68b244"/>
<rect x="732.40" y="298.76" width="6.8" height="14.0" fill="#6cb848"/>
<rect x="731.40" y="298.76" width="1" height="14.0" fill="#3e7a28"/>
<path d="M764.80,301.46 L771.20,305.76 L764.80,310.06Z" fill="#2a2f36"/>
<rect x="773.70" y="300.76" width="0.8" height="0.8" fill="#2c2c2c"/>
<rect x="773.70" y="305.76" width="0.8" height="0.8" fill="#2c2c2c"/>
<rect x="773.70" y="310.76" width="0.8" height="0.8" fill="#2c2c2c"/>
<rect x="731.40" y="313.69" width="31.6" height="14.0" fill="#68b244"/>
<rect x="732.40" y="313.69" width="6.8" height="14.0" fill="#6cb848"/>
<rect x="731.40" y="313.69" width="1" height="14.0" fill="#3e7a28"/>
<path d="M764.80,316.39 L771.20,320.69 L764.80,324.99Z" fill="#2a2f36"/>
<rect x="773.70" y="315.69" width="0.8" height="0.8" fill="#2c2c2c"/>
<rect x="773.70" y="320.69" width="0.8" height="0.8" fill="#2c2c2c"/>
<rect x="773.70" y="325.69" width="0.8" height="0.8" fill="#2c2c2c"/>
<rect x="731.40" y="328.62" width="31.6" height="14.0" fill="#68b244"/>
<rect x="732.40" y="328.62" width="6.8" height="14.0" fill="#6cb848"/>
<rect x="731.40" y="328.62" width="1" height="14.0" fill="#3e7a28"/>
<path d="M764.80,331.32 L771.20,335.62 L764.80,339.92Z" fill="#2a2f36"/>
<rect x="773.70" y="330.62" width="0.8" height="0.8" fill="#2c2c2c"/>
<rect x="773.70" y="335.62" width="0.8" height="0.8" fill="#2c2c2c"/>
<rect x="773.70" y="340.62" width="0.8" height="0.8" fill="#2c2c2c"/>
<rect x="731.40" y="343.55" width="31.6" height="14.0" fill="#68b244"/>
<rect x="732.40" y="343.55" width="6.8" height="14.0" fill="#6cb848"/>
<rect x="731.40" y="343.55" width="1" height="14.0" fill="#3e7a28"/>
<path d="M764.80,346.25 L771.20,350.55 L764.80,354.85Z" fill="#2a2f36"/>
<rect x="773.70" y="345.55" width="0.8" height="0.8" fill="#2c2c2c"/>
<rect x="773.70" y="350.55" width="0.8" height="0.8" fill="#2c2c2c"/>
<rect x="773.70" y="355.55" width="0.8" height="0.8" fill="#2c2c2c"/>
<rect x="731.40" y="358.48" width="31.6" height="14.0" fill="#68b244"/>
<rect x="732.40" y="358.48" width="6.8" height="14.0" fill="#6cb848"/>
<rect x="731.40" y="358.48" width="1" height="14.0" fill="#3e7a28"/>
<path d="M764.80,361.18 L771.20,365.48 L764.80,369.78Z" fill="#2a2f36"/>
<rect x="773.70" y="360.48" width="0.8" height="0.8" fill="#2c2c2c"/>
<rect x="773.70" y="365.48" width="0.8" height="0.8" fill="#2c2c2c"/>
<rect x="773.70" y="370.48" width="0.8" height="0.8" fill="#2c2c2c"/>
<rect x="731.40" y="373.41" width="31.6" height="14.0" fill="#68b244"/>
<rect x="732.40" y="373.41" width="6.8" height="14.0" fill="#6cb848"/>
<rect x="731.40" y="373.41" width="1" height="14.0" fill="#3e7a28"/>
<path d="M764.80,376.11 L771.20,380.41 L764.80,384.71Z" fill="#2a2f36"/>
<rect x="773.70" y="375.41" width="0.8" height="0.8" fill="#2c2c2c"/>
<rect x="773.70" y="380.41" width="0.8" height="0.8" fill="#2c2c2c"/>
<rect x="773.70" y="385.41" width="0.8" height="0.8" fill="#2c2c2c"/>
<rect x="731.40" y="388.34" width="31.6" height="14.0" fill="#68b244"/>
<rect x="732.40" y="388.34" width="6.8" height="14.0" fill="#6cb848"/>
<rect x="731.40" y="388.34" width="1" height="14.0" fill="#3e7a28"/>
<path d="M764.80,391.04 L771.20,395.34 L764.80,399.64Z" fill="#2a2f36"/>
<rect x="773.70" y="390.34" width="0.8" height="0.8" fill="#2c2c2c"/>
<rect x="773.70" y="395.34" width="0.8" height="0.8" fill="#2c2c2c"/>
<rect x="773.70" y="400.34" width="0.8" height="0.8" fill="#2c2c2c"/>
<rect x="731.40" y="403.27" width="31.6" height="14.0" fill="#68b244"/>
<rect x="732.40" y="403.27" width="6.8" height="14.0" fill="#6cb848"/>
<rect x="731.40" y="403.27" width="1" height="14.0" fill="#3e7a28"/>
<path d="M764.80,405.97 L771.20,410.27 L764.80,414.57Z" fill="#2a2f36"/>
<rect x="773.70" y="405.27" width="0.8" height="0.8" fill="#2c2c2c"/>
<rect x="773.70" y="410.27" width="0.8" height="0.8" fill="#2c2c2c"/>
<rect x="773.70" y="415.27" width="0.8" height="0.8" fill="#2c2c2c"/>
<rect x="731.40" y="418.20" width="31.6" height="14.0" fill="#68b244"/>
<rect x="732.40" y="418.20" width="6.8" height="14.0" fill="#6cb848"/>
<rect x="731.40" y="418.20" width="1" height="14.0" fill="#3e7a28"/>
<path d="M764.80,420.90 L771.20,425.20 L764.80,429.50Z" fill="#2a2f36"/>
<rect x="773.70" y="420.20" width="0.8" height="0.8" fill="#2c2c2c"/>
<rect x="773.70" y="425.20" width="0.8" height="0.8" fill="#2c2c2c"/>
<rect x="773.70" y="430.20" width="0.8" height="0.8" fill="#2c2c2c"/>
<rect x="731.40" y="433.13" width="31.6" height="14.0" fill="#68b244"/>
<rect x="732.40" y="433.13" width="6.8" height="14.0" fill="#6cb848"/>
<rect x="731.40" y="433.13" width="1" height="14.0" fill="#3e7a28"/>
<path d="M764.80,435.83 L771.20,440.13 L764.80,444.43Z" fill="#2a2f36"/>
<rect x="773.70" y="435.13" width="0.8" height="0.8" fill="#2c2c2c"/>
<rect x="773.70" y="440.13" width="0.8" height="0.8" fill="#2c2c2c"/>
<rect x="773.70" y="445.13" width="0.8" height="0.8" fill="#2c2c2c"/>
<rect x="789.7" y="263" width="17" height="190.3" fill="#323334"/>
<rect x="789.7" y="263" width="1.2" height="190.3" fill="#2a2a2a"/>
<rect x="806.4" y="262.5" width="1" height="191" fill="#262728"/>
<rect x="807.4" y="262.5" width="104" height="190.8" fill="url(#pg2)"/>
<rect x="911.2" y="268" width="9.4" height="88" fill="#2f3031"/>
<rect x="911.2" y="358.5" width="9.4" height="90.1" fill="#2f3031"/>
<rect x="816.5" y="274.9" width="20.5" height="71.9" rx="4.5" fill="none" stroke="#2a2b2c" stroke-width="1.8"/>
<rect x="816.5" y="369.6" width="20.5" height="71.4" rx="4.5" fill="none" stroke="#2a2b2c" stroke-width="1.8"/>
<rect x="840" y="266.5" width="0.8" height="182" fill="#4a3030"/>
<rect x="840.8" y="266.5" width="7" height="182" fill="rgba(60,62,63,0.4)"/>
<rect x="875.2" y="406.9" width="35.6" height="46" fill="#383a3b"/>
<rect x="878.0" y="411" width="1" height="34" fill="#303233"/>
<rect x="883.0" y="414" width="1" height="28" fill="#303233"/>
<rect x="888.0" y="411" width="1" height="22" fill="#303233"/>
<rect x="893.0" y="414" width="1" height="34" fill="#303233"/>
<rect x="898.0" y="411" width="1" height="28" fill="#303233"/>
<rect x="903.0" y="414" width="1" height="22" fill="#303233"/>
<circle cx="812" cy="280" r="0.8" fill="#2a2a2a"/>
<circle cx="812" cy="352" r="0.8" fill="#2a2a2a"/>
<circle cx="812" cy="373" r="0.8" fill="#2a2a2a"/>
<circle cx="812" cy="443" r="0.8" fill="#2a2a2a"/>
<circle cx="824" cy="356" r="0.8" fill="#2a2a2a"/>
<circle cx="824" cy="362" r="0.8" fill="#2a2a2a"/>
<circle cx="861" cy="356" r="0.8" fill="#2a2a2a"/>
<circle cx="861" cy="362" r="0.8" fill="#2a2a2a"/>
<circle cx="882" cy="356" r="0.8" fill="#2a2a2a"/>
<circle cx="882" cy="362" r="0.8" fill="#2a2a2a"/>
<circle cx="798.5" cy="277" r="0.8" fill="#2a2a2a"/></g><circle cx="1029" cy="347" r="5.1" fill="#0095d5"/><circle cx="1029" cy="368" r="5.1" fill="#9a9a9a"/></svg>
<div class="t" style="left:8.08px;top:8.62px;font-size:17.391px;font-weight:normal;color:#ececec;-webkit-text-stroke:0.35px #ececec;transform:scaleX(0.9375)">System</div>
<div class="t" style="left:69.50px;top:11.15px;font-size:15.942px;font-weight:normal;color:#d8d8d8;transform:scaleX(1.3442)">/</div>
<div class="t" style="left:87.54px;top:8.62px;font-size:17.391px;font-weight:normal;color:#ececec;-webkit-text-stroke:0.35px #ececec;transform:scaleX(0.9097)">View Enclosure</div>
<div class="t" style="left:1370.53px;top:9.85px;font-size:15.942px;font-weight:normal;color:#ececec;-webkit-text-stroke:0.35px #ececec;transform:scaleX(0.8425)">TrueNAS ENTERPRISE® © 2022 - iXsystems, Inc.</div>
<div class="t" style="left:39.28px;top:49.82px;font-size:17.391px;font-weight:bold;color:#e6e6e6;transform:scaleX(0.9164)">Disks</div>
<div class="t" style="left:136.60px;top:49.82px;font-size:17.391px;font-weight:bold;color:#e6e6e6;transform:scaleX(0.9026)">Power Supply</div>
<div class="t" style="left:295.36px;top:49.82px;font-size:17.391px;font-weight:bold;color:#e6e6e6;transform:scaleX(0.9143)">Cooling</div>
<div class="t" style="left:409.84px;top:49.82px;font-size:17.391px;font-weight:bold;color:#e6e6e6;transform:scaleX(0.9112)">Temperature Sensors</div>
<div class="t" style="left:625.70px;top:49.82px;font-size:17.391px;font-weight:bold;color:#e6e6e6;transform:scaleX(0.9020)">Enclosure</div>
<div class="t" style="left:756.84px;top:49.82px;font-size:17.391px;font-weight:bold;color:#e6e6e6;transform:scaleX(0.9154)">Voltage Sensor</div>
<div class="t" style="left:926.94px;top:49.82px;font-size:17.391px;font-weight:bold;color:#e6e6e6;transform:scaleX(0.8889)">SAS Expander</div>
<div class="t" style="left:252.95px;top:163.31px;font-size:22.464px;font-weight:bold;color:#e3e3e3;transform:scaleX(0.8583)">Disks on CELESTIC R0904-F0001-01 0430 (1)</div>
<div class="t" style="left:1087.92px;top:166.75px;font-size:15.942px;font-weight:bold;color:#e3e3e3;transform:scaleX(0.7919)">EDIT LABEL</div>
<div class="t" style="left:321.73px;top:339.52px;font-size:29.855px;font-weight:bold;color:#e3e3e3;transform:scaleX(0.8932)">Pools</div>
<div class="t" style="left:1049.31px;top:340.46px;font-size:14.521px;font-weight:normal;color:#e3e3e3;-webkit-text-stroke:0.35px #e3e3e3;transform:scaleX(1.0017)">tank</div>
<div class="t" style="left:1045.76px;top:361.28px;font-size:14.493px;font-weight:normal;color:#e3e3e3;-webkit-text-stroke:0.35px #e3e3e3;transform:scaleX(0.8987)">UNASSIGNED</div>
<div class="t" style="left:673.31px;top:471.29px;font-size:15.072px;font-weight:normal;color:#8a8a8a;-webkit-text-stroke:0.35px #8a8a8a;transform:scaleX(0.9124)">Choose a Disk</div>
<div class="t" style="left:252.86px;top:525.80px;font-size:18.116px;font-weight:normal;color:#e3e3e3;transform:scaleX(0.9954)">Disks Overview</div>
<div class="t" style="left:331.32px;top:675.92px;font-size:17.391px;font-weight:normal;color:#e3e3e3;transform:scaleX(0.9203)">Pools in Enclosure</div>
<div class="t" style="left:351.91px;top:699.97px;font-size:9.565px;font-weight:bold;color:#cfcfcf;transform:scaleX(1.0065)">All pools are online.</div>
<div class="t" style="left:353.21px;top:738.46px;font-size:14.638px;font-weight:bold;color:#ffffff;transform:scaleX(0.8865)">SHOW POOLS</div>
<div class="t" style="left:674.32px;top:675.92px;font-size:17.391px;font-weight:normal;color:#e3e3e3;transform:scaleX(0.9170)">Failed Disks</div>
<div class="t" style="left:680.32px;top:699.97px;font-size:9.565px;font-weight:bold;color:#cfcfcf;transform:scaleX(0.9909)">All disks healthy</div>
<div class="t" style="left:670.61px;top:738.46px;font-size:14.638px;font-weight:bold;color:#ffffff;transform:scaleX(0.8980)">SHOW STATUS</div>
<div class="t" style="left:983.53px;top:675.92px;font-size:17.391px;font-weight:normal;color:#e3e3e3;transform:scaleX(0.8885)">SAS Expanders</div>
<div class="t" style="left:998.01px;top:700.42px;font-size:9.041px;font-weight:bold;color:#cfcfcf;transform:scaleX(1.0737)">on this enclosure</div>
<div class="t" style="left:954.61px;top:738.46px;font-size:14.638px;font-weight:bold;color:#ffffff;transform:scaleX(0.8839)">SHOW EXPANDER STATUS</div>
<div class="t" style="left:1489.52px;top:94.26px;font-size:14.638px;font-weight:normal;color:#e3e3e3;transform:scaleX(0.9446)">TRUENAS-M40-HA (0)</div>
<div class="t" style="left:1532.79px;top:257.12px;font-size:15.507px;font-weight:normal;color:#e3e3e3;transform:scaleX(0.8926)">ES60 (1)</div>
</body></html>
